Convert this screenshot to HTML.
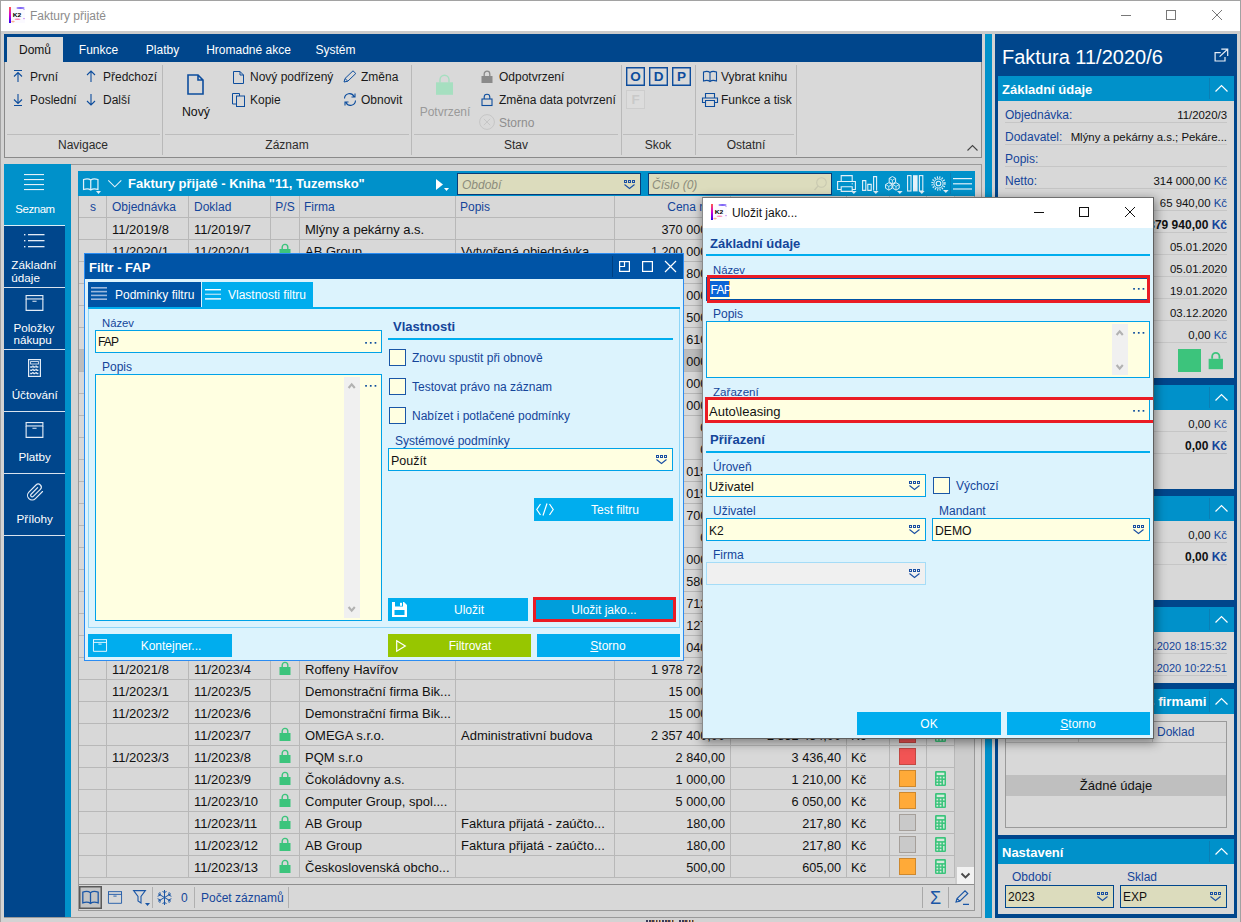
<!DOCTYPE html>
<html lang="cs"><head><meta charset="utf-8"><title>Faktury přijaté</title>
<style>

*{box-sizing:border-box;margin:0;padding:0}
html,body{width:1241px;height:922px;overflow:hidden;background:#d3d3d3}
body{font-family:"Liberation Sans",sans-serif;font-size:12px;color:#1a1a1a}
#win{position:absolute;left:0;top:0;width:1241px;height:922px;background:#d3d3d3;overflow:hidden}
.a{position:absolute}
.t{position:absolute;white-space:nowrap;line-height:1}
svg{position:absolute;overflow:visible}
.db{background:#00468c}
.lb{background:#0091ca}
.cy{background:#00adee}
.w{color:#fff}
.bl{color:#14459a}
.b{font-weight:bold}
.r{text-align:right}
.c{text-align:center}
.inp{position:absolute;background:#ffffe1;border:1px solid #00a2e8}
.gl{position:absolute;background:#b4b4b4}
</style></head><body>
<div id="win">
<div class="a" style="left:0px;top:0px;width:1241px;height:923px;background:#d3d3d3;border:1px solid #a2a2a2;"></div>
<div class="a" style="left:1px;top:1px;width:1239px;height:30px;background:#ffffff;"></div>
<div class="a" style="left:1px;top:31px;width:1239px;height:3px;background:#cccccc;"></div>
<svg style="left:9px;top:7px;" width="16" height="16" viewBox="0 0 16 16"><defs><linearGradient id="k2g1" x1="0" y1="0" x2="0" y2="1"><stop offset="0" stop-color="#ff5a4a"/><stop offset="0.5" stop-color="#d400d4"/><stop offset="1" stop-color="#2a00f0"/></linearGradient></defs><rect x="0" y="0" width="16" height="16" fill="#fbfaff"/><rect x="0" y="0" width="2" height="16" fill="url(#k2g1)"/><ellipse cx="11.5" cy="1" rx="4" ry="0.9" fill="#6748f5" opacity="0.85"/><ellipse cx="15" cy="2.6" rx="0.8" ry="0.5" fill="#9a70f0" opacity="0.7"/><ellipse cx="8.5" cy="12.2" rx="3" ry="0.7" fill="#ff5c9c" opacity="0.75"/><ellipse cx="15" cy="11.6" rx="0.9" ry="0.7" fill="#b060f0" opacity="0.75"/><ellipse cx="4" cy="14.6" rx="1.8" ry="0.8" fill="#ff9060" opacity="0.7"/><text x="3.7" y="10.1" font-family="Liberation Sans,sans-serif" font-size="6" font-weight="bold" fill="#000" textLength="8.6" lengthAdjust="spacingAndGlyphs">K2</text></svg>
<div class="t" style="top:6px;line-height:20px;font-size:12px;color:#8c8c8c;left:30px;">Faktury přijaté</div>
<svg style="left:1121px;top:15px;" width="10" height="1" viewBox="0 0 10 1"><rect width="10" height="1" fill="#787878"/></svg>
<svg style="left:1166px;top:10px;" width="10" height="10" viewBox="0 0 10 10"><rect x="0.5" y="0.5" width="9" height="9" fill="none" stroke="#787878"/></svg>
<svg style="left:1212px;top:10px;" width="10" height="10" viewBox="0 0 10 10"><path d="M0 0L10 10M10 0L0 10" stroke="#787878" stroke-width="1"/></svg>
<div class="a" style="left:4px;top:33.5px;width:978px;height:124.5px;background:#d9d9d9;border:1px solid #8a8a8a;border-top:none;"></div>
<div class="a" style="left:4px;top:33.5px;width:978px;height:28.5px;background:#00468c;"></div>
<div class="a" style="left:7px;top:37px;width:56px;height:25px;background:#d9d9d9;"></div>
<div class="t" style="top:40px;line-height:20px;font-size:12px;color:#111;left:5.0px;width:60px;text-align:center;">Domů</div>
<div class="t" style="top:40px;line-height:20px;font-size:12px;color:#fff;left:68.5px;width:60px;text-align:center;">Funkce</div>
<div class="t" style="top:40px;line-height:20px;font-size:12px;color:#fff;left:132.5px;width:60px;text-align:center;">Platby</div>
<div class="t" style="top:40px;line-height:20px;font-size:12px;color:#fff;left:198.5px;width:100px;text-align:center;">Hromadné akce</div>
<div class="t" style="top:40px;line-height:20px;font-size:12px;color:#fff;left:305.5px;width:60px;text-align:center;">Systém</div>
<div class="a" style="left:162px;top:65px;width:1px;height:90px;background:#b9b9b9;"></div>
<div class="a" style="left:411px;top:65px;width:1px;height:90px;background:#b9b9b9;"></div>
<div class="a" style="left:621px;top:65px;width:1px;height:90px;background:#b9b9b9;"></div>
<div class="a" style="left:695px;top:65px;width:1px;height:90px;background:#b9b9b9;"></div>
<div class="a" style="left:796px;top:65px;width:1px;height:90px;background:#b9b9b9;"></div>
<div class="a" style="left:7px;top:134px;width:153px;height:1px;background:#bdbdbd;"></div>
<div class="a" style="left:165px;top:134px;width:244px;height:1px;background:#bdbdbd;"></div>
<div class="a" style="left:414px;top:134px;width:204px;height:1px;background:#bdbdbd;"></div>
<div class="a" style="left:623px;top:134px;width:70px;height:1px;background:#bdbdbd;"></div>
<div class="a" style="left:698px;top:134px;width:96px;height:1px;background:#bdbdbd;"></div>
<div class="t" style="top:134.7px;line-height:20px;font-size:12px;color:#2b2b2b;left:33.0px;width:100px;text-align:center;">Navigace</div>
<div class="t" style="top:134.7px;line-height:20px;font-size:12px;color:#2b2b2b;left:237.0px;width:100px;text-align:center;">Záznam</div>
<div class="t" style="top:134.7px;line-height:20px;font-size:12px;color:#2b2b2b;left:466.0px;width:100px;text-align:center;">Stav</div>
<div class="t" style="top:134.7px;line-height:20px;font-size:12px;color:#2b2b2b;left:608.0px;width:100px;text-align:center;">Skok</div>
<div class="t" style="top:134.7px;line-height:20px;font-size:12px;color:#2b2b2b;left:696.0px;width:100px;text-align:center;">Ostatní</div>
<svg style="left:13px;top:70px;" width="10" height="12" viewBox="0 0 10 12"><path d="M1 0.5H9M5 2.5V12M1 6.5L5 2.5L9 6.5" fill="none" stroke="#0d4d9d" stroke-width="1.1"/></svg>
<svg style="left:13px;top:94px;" width="10" height="12" viewBox="0 0 10 12"><path d="M1 11.5H9M5 0V9.5M1 5.5L5 9.5L9 5.5" fill="none" stroke="#0d4d9d" stroke-width="1.1"/></svg>
<svg style="left:86px;top:70px;" width="10" height="12" viewBox="0 0 10 12"><path d="M5 1V12M1 5L5 1L9 5" fill="none" stroke="#0d4d9d" stroke-width="1.1"/></svg>
<svg style="left:86px;top:94px;" width="10" height="12" viewBox="0 0 10 12"><path d="M5 0V11M1 7L5 11L9 7" fill="none" stroke="#0d4d9d" stroke-width="1.1"/></svg>
<div class="t" style="top:67px;line-height:20px;font-size:12px;left:30px;">První</div>
<div class="t" style="top:89.6px;line-height:20px;font-size:12px;left:30px;">Poslední</div>
<div class="t" style="top:67px;line-height:20px;font-size:12px;left:103px;">Předchozí</div>
<div class="t" style="top:89.6px;line-height:20px;font-size:12px;left:103px;">Další</div>
<svg style="left:187px;top:74px;" width="17" height="21" viewBox="0 0 17 21"><path d="M1 1H11L16 6V20H1Z M11 1V6H16" fill="none" stroke="#0d4d9d" stroke-width="1.6"/></svg>
<div class="t" style="top:101.5px;line-height:20px;font-size:12.3px;color:#111;left:166.0px;width:60px;text-align:center;">Nový</div>
<svg style="left:233px;top:71px;" width="11" height="13" viewBox="0 0 11 13"><path d="M0.5 0.5H7L10.5 4V12.5H0.5Z M7 0.5V4H10.5" fill="none" stroke="#0d4d9d" stroke-width="1"/></svg>
<div class="t" style="top:67px;line-height:20px;font-size:12px;left:250px;">Nový podřízený</div>
<svg style="left:232px;top:93px;" width="13" height="14" viewBox="0 0 13 14"><path d="M4.5 11H0.5V0.5H7.5V3" fill="none" stroke="#0d4d9d" stroke-width="1"/><rect x="4.5" y="3" width="8" height="10.5" fill="none" stroke="#0d4d9d" stroke-width="1"/></svg>
<div class="t" style="top:90px;line-height:20px;font-size:12px;left:250px;">Kopie</div>
<svg style="left:343px;top:70px;" width="14" height="13" viewBox="0 0 14 13"><path d="M1 12L2 8.5L10 0.8L12.8 3.5L4.8 11.2Z M2 8.5L4.8 11.2" fill="none" stroke="#0d4d9d" stroke-width="1"/></svg>
<div class="t" style="top:67px;line-height:20px;font-size:12px;left:361px;">Změna</div>
<svg style="left:343px;top:93px;" width="14" height="13" viewBox="0 0 14 13"><path d="M1.5 5.5A5 5 0 0 1 11 3.5M12 0.5V4H8.5M12.5 7.5A5 5 0 0 1 3 9.5M2 12.5V9H5.5" fill="none" stroke="#0d4d9d" stroke-width="1.1"/></svg>
<div class="t" style="top:90px;line-height:20px;font-size:12px;left:361px;">Obnovit</div>
<svg style="left:436px;top:74px;" width="17" height="21" viewBox="0 0 17 21"><path d="M4 8.5V5.7a4.5 4.5 0 0 1 9 0V8.5" fill="none" stroke="#a6dfc0" stroke-width="1.4"/><rect x="0" y="8.3" width="17" height="12.5" fill="#a6dfc0"/></svg>
<div class="t" style="top:101.5px;line-height:20px;font-size:12px;color:#9a9a9a;left:405.0px;width:80px;text-align:center;">Potvrzení</div>
<svg style="left:481px;top:70px;" width="12" height="13" viewBox="0 0 12 13"><path d="M3.2 6V4a2.8 2.8 0 0 1 5.6 0V6" fill="none" stroke="#8a8a8a" stroke-width="1.3"/><rect x="0.5" y="6" width="11" height="7" fill="#8a8a8a"/></svg>
<div class="t" style="top:67px;line-height:20px;font-size:12px;left:499px;">Odpotvrzení</div>
<svg style="left:481px;top:93px;" width="12" height="13" viewBox="0 0 12 13"><path d="M3.2 6V4a2.8 2.8 0 0 1 5.6 0V6" fill="none" stroke="#0d4d9d" stroke-width="1.1"/><rect x="1" y="6" width="10" height="6.5" fill="none" stroke="#0d4d9d" stroke-width="1.1"/></svg>
<div class="t" style="top:90px;line-height:20px;font-size:12px;left:499px;">Změna data potvrzení</div>
<svg style="left:479px;top:114px;" width="16" height="16" viewBox="0 0 16 16"><circle cx="8" cy="8" r="7.4" fill="none" stroke="#c6c6c6" stroke-width="1"/><path d="M4.8 4.8L11.2 11.2M11.2 4.8L4.8 11.2" stroke="#c6c6c6" stroke-width="1"/></svg>
<div class="t" style="top:113px;line-height:20px;font-size:12px;color:#8e8e8e;left:499px;">Storno</div>
<div class="a" style="left:626px;top:67px;width:19px;height:19px;border:1px solid #0d4d9d;box-shadow:inset 0 0 0 0.4px #0d4d9d;"></div>
<div class="t" style="top:66.8px;line-height:20px;font-size:13.5px;color:#0d4d9d;font-weight:bold;left:625.5px;width:20px;text-align:center;">O</div>
<div class="a" style="left:649px;top:67px;width:19px;height:19px;border:1px solid #0d4d9d;box-shadow:inset 0 0 0 0.4px #0d4d9d;"></div>
<div class="t" style="top:66.8px;line-height:20px;font-size:13.5px;color:#0d4d9d;font-weight:bold;left:648.5px;width:20px;text-align:center;">D</div>
<div class="a" style="left:672px;top:67px;width:19px;height:19px;border:1px solid #0d4d9d;box-shadow:inset 0 0 0 0.4px #0d4d9d;"></div>
<div class="t" style="top:66.8px;line-height:20px;font-size:13.5px;color:#0d4d9d;font-weight:bold;left:671.5px;width:20px;text-align:center;">P</div>
<div class="a" style="left:626px;top:90px;width:19px;height:18.5px;background:#dcdcdc;border:1px solid #cdcdcd;"></div>
<div class="t" style="top:89.8px;line-height:20px;font-size:13.5px;color:#c9c9c9;font-weight:bold;left:625.5px;width:20px;text-align:center;">F</div>
<svg style="left:703px;top:71px;" width="14" height="11" viewBox="0 0 14 11"><path d="M7 1.5C5.5 0.3 2.5 0.3 0.5 1V10C2.5 9.3 5.5 9.3 7 10.5C8.5 9.3 11.5 9.3 13.5 10V1C11.5 0.3 8.5 0.3 7 1.5V10.5" fill="none" stroke="#0d4d9d" stroke-width="1.1"/></svg>
<div class="t" style="top:67px;line-height:20px;font-size:12px;left:721px;">Vybrat knihu</div>
<svg style="left:702px;top:93px;" width="16" height="14" viewBox="0 0 16 14"><path d="M3.5 5V0.5H12.5V5M3.5 9.5H0.5V5H15.5V9.5H12.5M3.5 7.5H12.5V13.5H3.5Z" fill="none" stroke="#0d4d9d" stroke-width="1.1"/></svg>
<div class="t" style="top:90px;line-height:20px;font-size:12px;left:721px;">Funkce a tisk</div>
<svg style="left:967px;top:145px;" width="11" height="6" viewBox="0 0 11 6"><path d="M0.5 5.5L5.5 0.5L10.5 5.5" fill="none" stroke="#444" stroke-width="1.1"/></svg>
<div class="a" style="left:4px;top:164px;width:978px;height:754px;background:#d4d4d4;border:1px solid #9a9a9a;"></div>
<div class="a" style="left:4px;top:164px;width:67px;height:753px;background:#0091ca;"></div>
<div class="a" style="left:4px;top:226px;width:61px;height:691px;background:#00468c;"></div>
<svg style="left:24px;top:174px;" width="20" height="17" viewBox="0 0 20 17"><rect x="0" y="0" width="20" height="1.1" fill="#e6f2f9"/><rect x="0" y="5" width="20" height="1.1" fill="#e6f2f9"/><rect x="0" y="10" width="20" height="1.1" fill="#e6f2f9"/><rect x="0" y="15" width="20" height="1.1" fill="#e6f2f9"/></svg>
<div class="t" style="top:199.2px;line-height:20px;font-size:11.4px;color:#fff;left:2.0px;width:66px;text-align:center;letter-spacing:-0.4px;">Seznam</div>
<div class="a" style="left:4px;top:287px;width:61px;height:1px;background:#ffffff;opacity:.85;"></div>
<div class="a" style="left:4px;top:349px;width:61px;height:1px;background:#ffffff;opacity:.85;"></div>
<div class="a" style="left:4px;top:411px;width:61px;height:1px;background:#ffffff;opacity:.85;"></div>
<div class="a" style="left:4px;top:473px;width:61px;height:1px;background:#ffffff;opacity:.85;"></div>
<div class="a" style="left:4px;top:535px;width:61px;height:1px;background:#ffffff;opacity:.85;"></div>
<div class="a" style="left:4px;top:225px;width:61px;height:1px;background:#ffffff;opacity:.85;"></div>
<svg style="left:24px;top:234px;" width="21" height="14" viewBox="0 0 21 14"><rect x="0" y="0" width="1.4" height="1.4" fill="#e4ecf6"/><rect x="4" y="0" width="16.5" height="1.3" fill="#e4ecf6"/><rect x="0" y="6" width="1.4" height="1.4" fill="#e4ecf6"/><rect x="4" y="6" width="16.5" height="1.3" fill="#e4ecf6"/><rect x="0" y="12" width="1.4" height="1.4" fill="#e4ecf6"/><rect x="4" y="12" width="16.5" height="1.3" fill="#e4ecf6"/></svg>
<div class="t" style="top:255.39999999999998px;line-height:20px;font-size:11.7px;color:#fff;left:11.3px;">Základní</div>
<div class="t" style="top:268px;line-height:20px;font-size:11.7px;color:#fff;left:11.3px;">údaje</div>
<svg style="left:25px;top:295.3px;" width="19" height="16" viewBox="0 0 19 17"><rect x="0.6" y="0.6" width="17.8" height="3.6" fill="none" stroke="#e4ecf6" stroke-width="1.2"/><path d="M0.6 4.2V16.4H18.4V4.2M7.3 6.6H11.7" fill="none" stroke="#e4ecf6" stroke-width="1.2"/></svg>
<div class="t" style="top:317.6px;line-height:20px;font-size:11.7px;color:#fff;left:13.4px;">Položky</div>
<div class="t" style="top:329.8px;line-height:20px;font-size:11.7px;color:#fff;left:13.4px;">nákupu</div>
<svg style="left:28px;top:359px;" width="13" height="18" viewBox="0 0 13 18"><rect x="0.6" y="0.6" width="11.8" height="16.8" fill="none" stroke="#e4ecf6" stroke-width="1.2"/><rect x="2.6" y="2.6" width="7.8" height="2.4" fill="none" stroke="#e4ecf6" stroke-width="0.9"/><path d="M2.2 8H10.8M2.2 11.2H10.8M2.2 14.4H10.8M4.9 6.6V15.6M8.1 6.6V15.6" stroke="#e4ecf6" stroke-width="1.5" stroke-dasharray="1.8 1.4"/></svg>
<div class="t" style="top:385.2px;line-height:20px;font-size:11.7px;color:#fff;left:1.7000000000000028px;width:66px;text-align:center;">Účtování</div>
<svg style="left:25px;top:422px;" width="19" height="16" viewBox="0 0 19 17"><rect x="0.6" y="0.6" width="17.8" height="3.6" fill="none" stroke="#e4ecf6" stroke-width="1.2"/><path d="M0.6 4.2V16.4H18.4V4.2M7.3 6.6H11.7" fill="none" stroke="#e4ecf6" stroke-width="1.2"/></svg>
<div class="t" style="top:447px;line-height:20px;font-size:11.7px;color:#fff;left:1.7000000000000028px;width:66px;text-align:center;">Platby</div>
<svg style="left:26px;top:483px;" width="18.5" height="18.5" viewBox="0 0 24 24"><path d="M21.44 11.05l-9.19 9.19a6 6 0 0 1-8.49-8.49l9.19-9.19a4 4 0 0 1 5.66 5.66l-9.2 9.19a2 2 0 0 1-2.83-2.83l8.49-8.48" fill="none" stroke="#e4ecf6" stroke-width="1.5" stroke-linecap="round"/></svg>
<div class="t" style="top:509px;line-height:20px;font-size:11.7px;color:#fff;left:1.7000000000000028px;width:66px;text-align:center;">Přílohy</div>
<div class="a" style="left:78px;top:171px;width:897px;height:740px;background:#d8d8d8;border:1px solid #9a9a9a;border-top:none;"></div>
<div class="a" style="left:78px;top:171px;width:897px;height:25px;background:#0091ca;"></div>
<svg style="left:83px;top:177.5px;" width="15.5" height="13" viewBox="0 0 14 11"><path d="M7 1.5C5.5 0.3 2.5 0.3 0.5 1V10C2.5 9.3 5.5 9.3 7 10.5C8.5 9.3 11.5 9.3 13.5 10V1C11.5 0.3 8.5 0.3 7 1.5V10.5" fill="none" stroke="#e2f1f9" stroke-width="1.1"/></svg>
<svg style="left:95.5px;top:190.5px;" width="5" height="3" viewBox="0 0 5 3"><path d="M0 0H5L2.5 3Z" fill="#e2f1f9"/></svg>
<svg style="left:108px;top:180px;" width="14" height="8" viewBox="0 0 14 8"><path d="M0.3 0.3L6.8 6.8L13.3 0.3" fill="none" stroke="#e2f1f9" stroke-width="1.1"/></svg>
<div class="t" style="top:174.4px;line-height:20px;font-size:13px;color:#fff;font-weight:bold;left:128px;">Faktury přijaté - Kniha "11, Tuzemsko"</div>
<svg style="left:436px;top:179px;" width="7" height="11" viewBox="0 0 7 11"><path d="M0 0L7 5.5L0 11Z" fill="#fff"/></svg>
<svg style="left:444px;top:188px;" width="5" height="3" viewBox="0 0 5 3"><path d="M0 0H5L2.5 3Z" fill="#fff"/></svg>
<div class="a" style="left:457px;top:172.5px;width:183.5px;height:22px;background:#dcdcbd;border:1px solid #0a3c78;"></div>
<div class="t" style="top:174.6px;line-height:20px;font-size:12px;color:#8c8c7c;left:462px;font-style:italic;">Období</div>
<svg style="left:624px;top:180px;" width="11" height="9" viewBox="0 0 11 9"><rect x="0.5" y="0.5" width="2" height="2" fill="none" stroke="#1a4fa3" stroke-width="1"/><rect x="4.5" y="0.5" width="2" height="2" fill="none" stroke="#1a4fa3" stroke-width="1"/><rect x="8.5" y="0.5" width="2" height="2" fill="none" stroke="#1a4fa3" stroke-width="1"/><path d="M0.5 4.5L5.5 8.5L10.5 4.5" fill="none" stroke="#1a4fa3" stroke-width="1.1"/></svg>
<div class="a" style="left:648px;top:172.5px;width:184px;height:22px;background:#dcdcbd;border:1px solid #0a3c78;"></div>
<div class="t" style="top:174.6px;line-height:20px;font-size:12px;color:#8c8c7c;left:652px;font-style:italic;">Číslo (0)</div>
<svg style="left:814px;top:177px;" width="13" height="14" viewBox="0 0 13 14"><circle cx="7.5" cy="5.5" r="4.8" fill="none" stroke="#c9c9b0" stroke-width="1.1"/><path d="M4 9L0.5 13" stroke="#c9c9b0" stroke-width="1.2"/></svg>
<svg style="left:837px;top:175px;" width="19" height="17" viewBox="0 0 19 17"><path d="M4.2 6.5V0.6H15.2V6.5M4.2 14.5H0.6V6.5H18.4V14.5H15.2M4.2 11.8H15.2V16.4H4.2Z" fill="none" stroke="#e2f1f9" stroke-width="1.1"/><rect x="14.6" y="8.4" width="1.4" height="0.9" fill="#e2f1f9"/></svg>
<svg style="left:851.4px;top:191px;" width="5.6" height="3" viewBox="0 0 5.6 3"><path d="M0 0H5.6L2.8 3Z" fill="#e2f1f9"/></svg>
<svg style="left:862px;top:176px;" width="15" height="15" viewBox="0 0 15 15"><path d="M0.6 14.4V4.6H3.8V14.4ZM5.8 14.4V8.4H9.2V14.4ZM11.6 14.4V0.6H14.6V14.4" fill="none" stroke="#e2f1f9" stroke-width="1.1"/></svg>
<svg style="left:873.3px;top:190.6px;" width="5.6" height="3" viewBox="0 0 5.6 3"><path d="M0 0H5.6L2.8 3Z" fill="#e2f1f9"/></svg>
<svg style="left:885px;top:176px;" width="16" height="16" viewBox="0 0 16 16"><path d="M7.4 0.5L10.60 2.35V6.050000000000001L7.4 7.9L4.20 6.050000000000001V2.35Z" fill="none" stroke="#e2f1f9" stroke-width="1"/><path d="M7.4 7.9V4.2L10.60 2.35M7.4 4.2L4.20 2.35" fill="none" stroke="#e2f1f9" stroke-width="0.8"/><path d="M3.8 6.7L7.00 8.55V12.25L3.8 14.100000000000001L0.60 12.25V8.55Z" fill="none" stroke="#e2f1f9" stroke-width="1"/><path d="M3.8 14.100000000000001V10.4L7.00 8.55M3.8 10.4L0.60 8.55" fill="none" stroke="#e2f1f9" stroke-width="0.8"/><path d="M11 6.7L14.20 8.55V12.25L11 14.100000000000001L7.80 12.25V8.55Z" fill="none" stroke="#e2f1f9" stroke-width="1"/><path d="M11 14.100000000000001V10.4L14.20 8.55M11 10.4L7.80 8.55" fill="none" stroke="#e2f1f9" stroke-width="0.8"/></svg>
<svg style="left:896.5px;top:190.6px;" width="5.6" height="3" viewBox="0 0 5.6 3"><path d="M0 0H5.6L2.8 3Z" fill="#e2f1f9"/></svg>
<svg style="left:907px;top:175px;" width="17" height="17" viewBox="0 0 17 17"><rect x="0.6" y="0.6" width="3.4" height="15.4" fill="none" stroke="#e2f1f9" stroke-width="1.1"/><rect x="6" y="0.2" width="4.6" height="16.2" fill="#e2f1f9"/><rect x="12.4" y="0.6" width="3.4" height="15.4" fill="none" stroke="#e2f1f9" stroke-width="1.1"/></svg>
<svg style="left:918.8px;top:191px;" width="5.6" height="3" viewBox="0 0 5.6 3"><path d="M0 0H5.6L2.8 3Z" fill="#e2f1f9"/></svg>
<svg style="left:931px;top:176px;" width="15" height="15" viewBox="0 0 15 15"><circle cx="7.5" cy="7.5" r="2.3" fill="none" stroke="#e2f1f9" stroke-width="1.1"/><circle cx="7.5" cy="7.5" r="4.6" fill="none" stroke="#e2f1f9" stroke-width="1"/><circle cx="7.5" cy="7.5" r="6.2" fill="none" stroke="#e2f1f9" stroke-width="2" stroke-dasharray="1.1 1.34"/></svg>
<svg style="left:943.4px;top:190.2px;" width="5.6" height="3" viewBox="0 0 5.6 3"><path d="M0 0H5.6L2.8 3Z" fill="#e2f1f9"/></svg>
<div class="a" style="left:950px;top:173px;width:1px;height:21px;background:#0a7fb5;"></div>
<svg style="left:953px;top:178px;" width="19" height="12" viewBox="0 0 19 12"><rect x="0" y="0.0" width="19" height="1.2" fill="#e2f1f9"/><rect x="0" y="5.2" width="19" height="1.2" fill="#e2f1f9"/><rect x="0" y="10.4" width="19" height="1.2" fill="#e2f1f9"/></svg>
<div class="a" style="left:79px;top:196px;width:875px;height:22px;background:#d8d8d8;"></div>
<div class="t" style="top:197px;line-height:20px;font-size:12px;color:#14459a;left:79.0px;width:28px;text-align:center;">s</div>
<div class="t" style="top:197px;line-height:20px;font-size:12px;color:#14459a;left:112px;">Objednávka</div>
<div class="t" style="top:197px;line-height:20px;font-size:12px;color:#14459a;left:194px;">Doklad</div>
<div class="t" style="top:197px;line-height:20px;font-size:12px;color:#14459a;left:271.0px;width:28px;text-align:center;">P/S</div>
<div class="t" style="top:197px;line-height:20px;font-size:12px;color:#14459a;left:304px;">Firma</div>
<div class="t" style="top:197px;line-height:20px;font-size:12px;color:#14459a;left:460px;">Popis</div>
<div class="t" style="top:197px;line-height:20px;font-size:12px;color:#14459a;left:426px;width:300px;text-align:right;">Cena netto</div>
<div class="t" style="top:197px;line-height:20px;font-size:12px;color:#14459a;left:542px;width:300px;text-align:right;">Cena brutto</div>
<div class="t" style="top:197px;line-height:20px;font-size:12px;color:#14459a;left:851px;">Měna</div>
<div class="t" style="top:197px;line-height:20px;font-size:12px;color:#14459a;left:895px;"></div>
<div class="t" style="top:197px;line-height:20px;font-size:12px;color:#14459a;left:932px;"></div>
<div class="t" style="top:219.5px;line-height:20px;font-size:13px;color:#111;left:112px;">11/2019/8</div>
<div class="t" style="top:219.5px;line-height:20px;font-size:13px;color:#111;left:194px;">11/2019/7</div>
<div class="t" style="top:219.5px;line-height:20px;font-size:13px;color:#111;left:305px;">Mlýny a pekárny a.s.</div>
<div class="t" style="top:219.5px;line-height:20px;font-size:12.7px;color:#111;left:425px;width:300px;text-align:right;">370 000,00</div>
<div class="t" style="top:219.5px;line-height:20px;font-size:12.7px;color:#111;left:541px;width:300px;text-align:right;">447 700,00</div>
<div class="t" style="top:219.5px;line-height:20px;font-size:13px;color:#111;left:851px;">Kč</div>
<div class="a" style="left:899px;top:220.4px;width:17px;height:16.5px;background:#ffaa38;border:1px solid rgba(60,40,20,.26);"></div>
<svg style="left:935px;top:220.9px;" width="11" height="15" viewBox="0 0 11 15"><rect x="0" y="0" width="11" height="15" rx="1.2" fill="#3cc47c"/><rect x="1.7" y="1.7" width="7.6" height="2.4" fill="#d6eadd"/><rect x="1.5" y="5.7" width="1.7" height="1.7" fill="#d6eadd"/><rect x="4.7" y="5.7" width="1.7" height="1.7" fill="#d6eadd"/><rect x="7.9" y="5.7" width="1.7" height="1.7" fill="#d6eadd"/><rect x="1.5" y="8.8" width="1.7" height="1.7" fill="#d6eadd"/><rect x="4.7" y="8.8" width="1.7" height="1.7" fill="#d6eadd"/><rect x="1.5" y="11.9" width="1.7" height="1.7" fill="#d6eadd"/><rect x="4.7" y="11.9" width="1.7" height="1.7" fill="#d6eadd"/><rect x="8.1" y="9" width="1.4" height="4.5" fill="#d6eadd"/></svg>
<div class="t" style="top:241.5px;line-height:20px;font-size:13px;color:#111;left:112px;">11/2020/1</div>
<div class="t" style="top:241.5px;line-height:20px;font-size:13px;color:#111;left:194px;">11/2020/1</div>
<svg style="left:278.6px;top:243.4px;" width="12.0" height="14.0" viewBox="0 0 12 14"><path d="M3.2 6V4.2a2.8 2.8 0 0 1 5.6 0V6" fill="none" stroke="#3cc47c" stroke-width="1.4"/><rect x="0.5" y="6" width="11" height="8" fill="#3cc47c"/></svg>
<div class="t" style="top:241.5px;line-height:20px;font-size:13px;color:#111;left:305px;">AB Group</div>
<div class="t" style="top:241.5px;line-height:20px;font-size:13px;color:#111;left:461px;">Vytvořená objednávka</div>
<div class="t" style="top:241.5px;line-height:20px;font-size:12.7px;color:#111;left:425px;width:300px;text-align:right;">1 200 000,00</div>
<div class="t" style="top:241.5px;line-height:20px;font-size:12.7px;color:#111;left:541px;width:300px;text-align:right;">1 452 000,00</div>
<div class="t" style="top:241.5px;line-height:20px;font-size:13px;color:#111;left:851px;">Kč</div>
<div class="a" style="left:899px;top:242.4px;width:17px;height:16.5px;background:#ffaa38;border:1px solid rgba(60,40,20,.26);"></div>
<svg style="left:935px;top:242.9px;" width="11" height="15" viewBox="0 0 11 15"><rect x="0" y="0" width="11" height="15" rx="1.2" fill="#3cc47c"/><rect x="1.7" y="1.7" width="7.6" height="2.4" fill="#d6eadd"/><rect x="1.5" y="5.7" width="1.7" height="1.7" fill="#d6eadd"/><rect x="4.7" y="5.7" width="1.7" height="1.7" fill="#d6eadd"/><rect x="7.9" y="5.7" width="1.7" height="1.7" fill="#d6eadd"/><rect x="1.5" y="8.8" width="1.7" height="1.7" fill="#d6eadd"/><rect x="4.7" y="8.8" width="1.7" height="1.7" fill="#d6eadd"/><rect x="1.5" y="11.9" width="1.7" height="1.7" fill="#d6eadd"/><rect x="4.7" y="11.9" width="1.7" height="1.7" fill="#d6eadd"/><rect x="8.1" y="9" width="1.4" height="4.5" fill="#d6eadd"/></svg>
<div class="t" style="top:263.5px;line-height:20px;font-size:13px;color:#111;left:112px;">11/2020/2</div>
<div class="t" style="top:263.5px;line-height:20px;font-size:13px;color:#111;left:194px;">11/2020/2</div>
<svg style="left:278.6px;top:265.4px;" width="12.0" height="14.0" viewBox="0 0 12 14"><path d="M3.2 6V4.2a2.8 2.8 0 0 1 5.6 0V6" fill="none" stroke="#3cc47c" stroke-width="1.4"/><rect x="0.5" y="6" width="11" height="8" fill="#3cc47c"/></svg>
<div class="t" style="top:263.5px;line-height:20px;font-size:13px;color:#111;left:305px;">AB Group</div>
<div class="t" style="top:263.5px;line-height:20px;font-size:12.7px;color:#111;left:425px;width:300px;text-align:right;">800,00</div>
<div class="t" style="top:263.5px;line-height:20px;font-size:12.7px;color:#111;left:541px;width:300px;text-align:right;">968,00</div>
<div class="t" style="top:263.5px;line-height:20px;font-size:13px;color:#111;left:851px;">Kč</div>
<div class="a" style="left:899px;top:264.4px;width:17px;height:16.5px;background:#ffaa38;border:1px solid rgba(60,40,20,.26);"></div>
<svg style="left:935px;top:264.9px;" width="11" height="15" viewBox="0 0 11 15"><rect x="0" y="0" width="11" height="15" rx="1.2" fill="#3cc47c"/><rect x="1.7" y="1.7" width="7.6" height="2.4" fill="#d6eadd"/><rect x="1.5" y="5.7" width="1.7" height="1.7" fill="#d6eadd"/><rect x="4.7" y="5.7" width="1.7" height="1.7" fill="#d6eadd"/><rect x="7.9" y="5.7" width="1.7" height="1.7" fill="#d6eadd"/><rect x="1.5" y="8.8" width="1.7" height="1.7" fill="#d6eadd"/><rect x="4.7" y="8.8" width="1.7" height="1.7" fill="#d6eadd"/><rect x="1.5" y="11.9" width="1.7" height="1.7" fill="#d6eadd"/><rect x="4.7" y="11.9" width="1.7" height="1.7" fill="#d6eadd"/><rect x="8.1" y="9" width="1.4" height="4.5" fill="#d6eadd"/></svg>
<div class="t" style="top:285.5px;line-height:20px;font-size:13px;color:#111;left:194px;">11/2020/3</div>
<svg style="left:278.6px;top:287.4px;" width="12.0" height="14.0" viewBox="0 0 12 14"><path d="M3.2 6V4.2a2.8 2.8 0 0 1 5.6 0V6" fill="none" stroke="#3cc47c" stroke-width="1.4"/><rect x="0.5" y="6" width="11" height="8" fill="#3cc47c"/></svg>
<div class="t" style="top:285.5px;line-height:20px;font-size:13px;color:#111;left:305px;">AB Group</div>
<div class="t" style="top:285.5px;line-height:20px;font-size:12.7px;color:#111;left:425px;width:300px;text-align:right;">1 000,00</div>
<div class="t" style="top:285.5px;line-height:20px;font-size:12.7px;color:#111;left:541px;width:300px;text-align:right;">1 210,00</div>
<div class="t" style="top:285.5px;line-height:20px;font-size:13px;color:#111;left:851px;">Kč</div>
<div class="a" style="left:899px;top:286.4px;width:17px;height:16.5px;background:#ffaa38;border:1px solid rgba(60,40,20,.26);"></div>
<svg style="left:935px;top:286.9px;" width="11" height="15" viewBox="0 0 11 15"><rect x="0" y="0" width="11" height="15" rx="1.2" fill="#3cc47c"/><rect x="1.7" y="1.7" width="7.6" height="2.4" fill="#d6eadd"/><rect x="1.5" y="5.7" width="1.7" height="1.7" fill="#d6eadd"/><rect x="4.7" y="5.7" width="1.7" height="1.7" fill="#d6eadd"/><rect x="7.9" y="5.7" width="1.7" height="1.7" fill="#d6eadd"/><rect x="1.5" y="8.8" width="1.7" height="1.7" fill="#d6eadd"/><rect x="4.7" y="8.8" width="1.7" height="1.7" fill="#d6eadd"/><rect x="1.5" y="11.9" width="1.7" height="1.7" fill="#d6eadd"/><rect x="4.7" y="11.9" width="1.7" height="1.7" fill="#d6eadd"/><rect x="8.1" y="9" width="1.4" height="4.5" fill="#d6eadd"/></svg>
<div class="t" style="top:307.5px;line-height:20px;font-size:13px;color:#111;left:194px;">11/2020/4</div>
<svg style="left:278.6px;top:309.4px;" width="12.0" height="14.0" viewBox="0 0 12 14"><path d="M3.2 6V4.2a2.8 2.8 0 0 1 5.6 0V6" fill="none" stroke="#3cc47c" stroke-width="1.4"/><rect x="0.5" y="6" width="11" height="8" fill="#3cc47c"/></svg>
<div class="t" style="top:307.5px;line-height:20px;font-size:13px;color:#111;left:305px;">AB Group</div>
<div class="t" style="top:307.5px;line-height:20px;font-size:12.7px;color:#111;left:425px;width:300px;text-align:right;">500,00</div>
<div class="t" style="top:307.5px;line-height:20px;font-size:12.7px;color:#111;left:541px;width:300px;text-align:right;">605,00</div>
<div class="t" style="top:307.5px;line-height:20px;font-size:13px;color:#111;left:851px;">Kč</div>
<div class="a" style="left:899px;top:308.4px;width:17px;height:16.5px;background:#ffaa38;border:1px solid rgba(60,40,20,.26);"></div>
<svg style="left:935px;top:308.9px;" width="11" height="15" viewBox="0 0 11 15"><rect x="0" y="0" width="11" height="15" rx="1.2" fill="#3cc47c"/><rect x="1.7" y="1.7" width="7.6" height="2.4" fill="#d6eadd"/><rect x="1.5" y="5.7" width="1.7" height="1.7" fill="#d6eadd"/><rect x="4.7" y="5.7" width="1.7" height="1.7" fill="#d6eadd"/><rect x="7.9" y="5.7" width="1.7" height="1.7" fill="#d6eadd"/><rect x="1.5" y="8.8" width="1.7" height="1.7" fill="#d6eadd"/><rect x="4.7" y="8.8" width="1.7" height="1.7" fill="#d6eadd"/><rect x="1.5" y="11.9" width="1.7" height="1.7" fill="#d6eadd"/><rect x="4.7" y="11.9" width="1.7" height="1.7" fill="#d6eadd"/><rect x="8.1" y="9" width="1.4" height="4.5" fill="#d6eadd"/></svg>
<div class="t" style="top:329.5px;line-height:20px;font-size:13px;color:#111;left:194px;">11/2020/5</div>
<svg style="left:278.6px;top:331.4px;" width="12.0" height="14.0" viewBox="0 0 12 14"><path d="M3.2 6V4.2a2.8 2.8 0 0 1 5.6 0V6" fill="none" stroke="#3cc47c" stroke-width="1.4"/><rect x="0.5" y="6" width="11" height="8" fill="#3cc47c"/></svg>
<div class="t" style="top:329.5px;line-height:20px;font-size:13px;color:#111;left:305px;">AB Group</div>
<div class="t" style="top:329.5px;line-height:20px;font-size:12.7px;color:#111;left:425px;width:300px;text-align:right;">610,00</div>
<div class="t" style="top:329.5px;line-height:20px;font-size:12.7px;color:#111;left:541px;width:300px;text-align:right;">738,10</div>
<div class="t" style="top:329.5px;line-height:20px;font-size:13px;color:#111;left:851px;">Kč</div>
<div class="a" style="left:899px;top:330.4px;width:17px;height:16.5px;background:#ffaa38;border:1px solid rgba(60,40,20,.26);"></div>
<svg style="left:935px;top:330.9px;" width="11" height="15" viewBox="0 0 11 15"><rect x="0" y="0" width="11" height="15" rx="1.2" fill="#3cc47c"/><rect x="1.7" y="1.7" width="7.6" height="2.4" fill="#d6eadd"/><rect x="1.5" y="5.7" width="1.7" height="1.7" fill="#d6eadd"/><rect x="4.7" y="5.7" width="1.7" height="1.7" fill="#d6eadd"/><rect x="7.9" y="5.7" width="1.7" height="1.7" fill="#d6eadd"/><rect x="1.5" y="8.8" width="1.7" height="1.7" fill="#d6eadd"/><rect x="4.7" y="8.8" width="1.7" height="1.7" fill="#d6eadd"/><rect x="1.5" y="11.9" width="1.7" height="1.7" fill="#d6eadd"/><rect x="4.7" y="11.9" width="1.7" height="1.7" fill="#d6eadd"/><rect x="8.1" y="9" width="1.4" height="4.5" fill="#d6eadd"/></svg>
<div class="a" style="left:79px;top:350px;width:875px;height:22px;background:#bdbdbd;"></div>
<div class="t" style="top:351.5px;line-height:20px;font-size:13px;color:#111;left:112px;">11/2020/3</div>
<div class="t" style="top:351.5px;line-height:20px;font-size:13px;color:#111;left:194px;">11/2020/6</div>
<svg style="left:278.6px;top:353.4px;" width="12.0" height="14.0" viewBox="0 0 12 14"><path d="M3.2 6V4.2a2.8 2.8 0 0 1 5.6 0V6" fill="none" stroke="#3cc47c" stroke-width="1.4"/><rect x="0.5" y="6" width="11" height="8" fill="#3cc47c"/></svg>
<div class="t" style="top:351.5px;line-height:20px;font-size:13px;color:#111;left:305px;">Mlýny a pekárny a.s.</div>
<div class="t" style="top:351.5px;line-height:20px;font-size:12.7px;color:#111;left:425px;width:300px;text-align:right;">314 000,00</div>
<div class="t" style="top:351.5px;line-height:20px;font-size:12.7px;color:#111;left:541px;width:300px;text-align:right;">379 940,00</div>
<div class="t" style="top:351.5px;line-height:20px;font-size:13px;color:#111;left:851px;">Kč</div>
<div class="a" style="left:899px;top:352.4px;width:17px;height:16.5px;background:#3cc47c;border:1px solid rgba(60,40,20,.26);"></div>
<div class="t" style="top:373.5px;line-height:20px;font-size:13px;color:#111;left:194px;">11/2020/7</div>
<svg style="left:278.6px;top:375.4px;" width="12.0" height="14.0" viewBox="0 0 12 14"><path d="M3.2 6V4.2a2.8 2.8 0 0 1 5.6 0V6" fill="none" stroke="#3cc47c" stroke-width="1.4"/><rect x="0.5" y="6" width="11" height="8" fill="#3cc47c"/></svg>
<div class="t" style="top:373.5px;line-height:20px;font-size:13px;color:#111;left:305px;">AB Group</div>
<div class="t" style="top:373.5px;line-height:20px;font-size:12.7px;color:#111;left:425px;width:300px;text-align:right;">1 000,00</div>
<div class="t" style="top:373.5px;line-height:20px;font-size:12.7px;color:#111;left:541px;width:300px;text-align:right;">1 210,00</div>
<div class="t" style="top:373.5px;line-height:20px;font-size:13px;color:#111;left:851px;">Kč</div>
<div class="a" style="left:899px;top:374.4px;width:17px;height:16.5px;background:#ffaa38;border:1px solid rgba(60,40,20,.26);"></div>
<svg style="left:935px;top:374.9px;" width="11" height="15" viewBox="0 0 11 15"><rect x="0" y="0" width="11" height="15" rx="1.2" fill="#3cc47c"/><rect x="1.7" y="1.7" width="7.6" height="2.4" fill="#d6eadd"/><rect x="1.5" y="5.7" width="1.7" height="1.7" fill="#d6eadd"/><rect x="4.7" y="5.7" width="1.7" height="1.7" fill="#d6eadd"/><rect x="7.9" y="5.7" width="1.7" height="1.7" fill="#d6eadd"/><rect x="1.5" y="8.8" width="1.7" height="1.7" fill="#d6eadd"/><rect x="4.7" y="8.8" width="1.7" height="1.7" fill="#d6eadd"/><rect x="1.5" y="11.9" width="1.7" height="1.7" fill="#d6eadd"/><rect x="4.7" y="11.9" width="1.7" height="1.7" fill="#d6eadd"/><rect x="8.1" y="9" width="1.4" height="4.5" fill="#d6eadd"/></svg>
<div class="t" style="top:395.5px;line-height:20px;font-size:13px;color:#111;left:194px;">11/2020/8</div>
<svg style="left:278.6px;top:397.4px;" width="12.0" height="14.0" viewBox="0 0 12 14"><path d="M3.2 6V4.2a2.8 2.8 0 0 1 5.6 0V6" fill="none" stroke="#3cc47c" stroke-width="1.4"/><rect x="0.5" y="6" width="11" height="8" fill="#3cc47c"/></svg>
<div class="t" style="top:395.5px;line-height:20px;font-size:13px;color:#111;left:305px;">AB Group</div>
<div class="t" style="top:395.5px;line-height:20px;font-size:12.7px;color:#111;left:425px;width:300px;text-align:right;">2 000,00</div>
<div class="t" style="top:395.5px;line-height:20px;font-size:12.7px;color:#111;left:541px;width:300px;text-align:right;">2 420,00</div>
<div class="t" style="top:395.5px;line-height:20px;font-size:13px;color:#111;left:851px;">Kč</div>
<div class="a" style="left:899px;top:396.4px;width:17px;height:16.5px;background:#ffaa38;border:1px solid rgba(60,40,20,.26);"></div>
<svg style="left:935px;top:396.9px;" width="11" height="15" viewBox="0 0 11 15"><rect x="0" y="0" width="11" height="15" rx="1.2" fill="#3cc47c"/><rect x="1.7" y="1.7" width="7.6" height="2.4" fill="#d6eadd"/><rect x="1.5" y="5.7" width="1.7" height="1.7" fill="#d6eadd"/><rect x="4.7" y="5.7" width="1.7" height="1.7" fill="#d6eadd"/><rect x="7.9" y="5.7" width="1.7" height="1.7" fill="#d6eadd"/><rect x="1.5" y="8.8" width="1.7" height="1.7" fill="#d6eadd"/><rect x="4.7" y="8.8" width="1.7" height="1.7" fill="#d6eadd"/><rect x="1.5" y="11.9" width="1.7" height="1.7" fill="#d6eadd"/><rect x="4.7" y="11.9" width="1.7" height="1.7" fill="#d6eadd"/><rect x="8.1" y="9" width="1.4" height="4.5" fill="#d6eadd"/></svg>
<div class="t" style="top:417.5px;line-height:20px;font-size:13px;color:#111;left:194px;">11/2020/9</div>
<svg style="left:278.6px;top:419.4px;" width="12.0" height="14.0" viewBox="0 0 12 14"><path d="M3.2 6V4.2a2.8 2.8 0 0 1 5.6 0V6" fill="none" stroke="#3cc47c" stroke-width="1.4"/><rect x="0.5" y="6" width="11" height="8" fill="#3cc47c"/></svg>
<div class="t" style="top:417.5px;line-height:20px;font-size:13px;color:#111;left:305px;">AB Group</div>
<div class="t" style="top:417.5px;line-height:20px;font-size:12.7px;color:#111;left:425px;width:300px;text-align:right;">0,00</div>
<div class="t" style="top:417.5px;line-height:20px;font-size:12.7px;color:#111;left:541px;width:300px;text-align:right;">0,00</div>
<div class="t" style="top:417.5px;line-height:20px;font-size:13px;color:#111;left:851px;">Kč</div>
<div class="a" style="left:899px;top:418.4px;width:17px;height:16.5px;background:#ffaa38;border:1px solid rgba(60,40,20,.26);"></div>
<svg style="left:935px;top:418.9px;" width="11" height="15" viewBox="0 0 11 15"><rect x="0" y="0" width="11" height="15" rx="1.2" fill="#3cc47c"/><rect x="1.7" y="1.7" width="7.6" height="2.4" fill="#d6eadd"/><rect x="1.5" y="5.7" width="1.7" height="1.7" fill="#d6eadd"/><rect x="4.7" y="5.7" width="1.7" height="1.7" fill="#d6eadd"/><rect x="7.9" y="5.7" width="1.7" height="1.7" fill="#d6eadd"/><rect x="1.5" y="8.8" width="1.7" height="1.7" fill="#d6eadd"/><rect x="4.7" y="8.8" width="1.7" height="1.7" fill="#d6eadd"/><rect x="1.5" y="11.9" width="1.7" height="1.7" fill="#d6eadd"/><rect x="4.7" y="11.9" width="1.7" height="1.7" fill="#d6eadd"/><rect x="8.1" y="9" width="1.4" height="4.5" fill="#d6eadd"/></svg>
<div class="t" style="top:439.5px;line-height:20px;font-size:13px;color:#111;left:194px;">11/2020/10</div>
<svg style="left:278.6px;top:441.4px;" width="12.0" height="14.0" viewBox="0 0 12 14"><path d="M3.2 6V4.2a2.8 2.8 0 0 1 5.6 0V6" fill="none" stroke="#3cc47c" stroke-width="1.4"/><rect x="0.5" y="6" width="11" height="8" fill="#3cc47c"/></svg>
<div class="t" style="top:439.5px;line-height:20px;font-size:13px;color:#111;left:305px;">AB Group</div>
<div class="t" style="top:439.5px;line-height:20px;font-size:12.7px;color:#111;left:425px;width:300px;text-align:right;">0,00</div>
<div class="t" style="top:439.5px;line-height:20px;font-size:12.7px;color:#111;left:541px;width:300px;text-align:right;">0,00</div>
<div class="t" style="top:439.5px;line-height:20px;font-size:13px;color:#111;left:851px;">Kč</div>
<div class="a" style="left:899px;top:440.4px;width:17px;height:16.5px;background:#ffaa38;border:1px solid rgba(60,40,20,.26);"></div>
<svg style="left:935px;top:440.9px;" width="11" height="15" viewBox="0 0 11 15"><rect x="0" y="0" width="11" height="15" rx="1.2" fill="#3cc47c"/><rect x="1.7" y="1.7" width="7.6" height="2.4" fill="#d6eadd"/><rect x="1.5" y="5.7" width="1.7" height="1.7" fill="#d6eadd"/><rect x="4.7" y="5.7" width="1.7" height="1.7" fill="#d6eadd"/><rect x="7.9" y="5.7" width="1.7" height="1.7" fill="#d6eadd"/><rect x="1.5" y="8.8" width="1.7" height="1.7" fill="#d6eadd"/><rect x="4.7" y="8.8" width="1.7" height="1.7" fill="#d6eadd"/><rect x="1.5" y="11.9" width="1.7" height="1.7" fill="#d6eadd"/><rect x="4.7" y="11.9" width="1.7" height="1.7" fill="#d6eadd"/><rect x="8.1" y="9" width="1.4" height="4.5" fill="#d6eadd"/></svg>
<div class="t" style="top:461.5px;line-height:20px;font-size:13px;color:#111;left:194px;">11/2021/1</div>
<svg style="left:278.6px;top:463.4px;" width="12.0" height="14.0" viewBox="0 0 12 14"><path d="M3.2 6V4.2a2.8 2.8 0 0 1 5.6 0V6" fill="none" stroke="#3cc47c" stroke-width="1.4"/><rect x="0.5" y="6" width="11" height="8" fill="#3cc47c"/></svg>
<div class="t" style="top:461.5px;line-height:20px;font-size:13px;color:#111;left:305px;">AB Group</div>
<div class="t" style="top:461.5px;line-height:20px;font-size:12.7px;color:#111;left:425px;width:300px;text-align:right;">1 015,00</div>
<div class="t" style="top:461.5px;line-height:20px;font-size:12.7px;color:#111;left:541px;width:300px;text-align:right;">1 228,15</div>
<div class="t" style="top:461.5px;line-height:20px;font-size:13px;color:#111;left:851px;">Kč</div>
<div class="a" style="left:899px;top:462.4px;width:17px;height:16.5px;background:#ffaa38;border:1px solid rgba(60,40,20,.26);"></div>
<svg style="left:935px;top:462.9px;" width="11" height="15" viewBox="0 0 11 15"><rect x="0" y="0" width="11" height="15" rx="1.2" fill="#3cc47c"/><rect x="1.7" y="1.7" width="7.6" height="2.4" fill="#d6eadd"/><rect x="1.5" y="5.7" width="1.7" height="1.7" fill="#d6eadd"/><rect x="4.7" y="5.7" width="1.7" height="1.7" fill="#d6eadd"/><rect x="7.9" y="5.7" width="1.7" height="1.7" fill="#d6eadd"/><rect x="1.5" y="8.8" width="1.7" height="1.7" fill="#d6eadd"/><rect x="4.7" y="8.8" width="1.7" height="1.7" fill="#d6eadd"/><rect x="1.5" y="11.9" width="1.7" height="1.7" fill="#d6eadd"/><rect x="4.7" y="11.9" width="1.7" height="1.7" fill="#d6eadd"/><rect x="8.1" y="9" width="1.4" height="4.5" fill="#d6eadd"/></svg>
<div class="t" style="top:483.5px;line-height:20px;font-size:13px;color:#111;left:194px;">11/2021/2</div>
<svg style="left:278.6px;top:485.4px;" width="12.0" height="14.0" viewBox="0 0 12 14"><path d="M3.2 6V4.2a2.8 2.8 0 0 1 5.6 0V6" fill="none" stroke="#3cc47c" stroke-width="1.4"/><rect x="0.5" y="6" width="11" height="8" fill="#3cc47c"/></svg>
<div class="t" style="top:483.5px;line-height:20px;font-size:13px;color:#111;left:305px;">AB Group</div>
<div class="t" style="top:483.5px;line-height:20px;font-size:12.7px;color:#111;left:425px;width:300px;text-align:right;">1 015,00</div>
<div class="t" style="top:483.5px;line-height:20px;font-size:12.7px;color:#111;left:541px;width:300px;text-align:right;">1 228,15</div>
<div class="t" style="top:483.5px;line-height:20px;font-size:13px;color:#111;left:851px;">Kč</div>
<div class="a" style="left:899px;top:484.4px;width:17px;height:16.5px;background:#ffaa38;border:1px solid rgba(60,40,20,.26);"></div>
<svg style="left:935px;top:484.9px;" width="11" height="15" viewBox="0 0 11 15"><rect x="0" y="0" width="11" height="15" rx="1.2" fill="#3cc47c"/><rect x="1.7" y="1.7" width="7.6" height="2.4" fill="#d6eadd"/><rect x="1.5" y="5.7" width="1.7" height="1.7" fill="#d6eadd"/><rect x="4.7" y="5.7" width="1.7" height="1.7" fill="#d6eadd"/><rect x="7.9" y="5.7" width="1.7" height="1.7" fill="#d6eadd"/><rect x="1.5" y="8.8" width="1.7" height="1.7" fill="#d6eadd"/><rect x="4.7" y="8.8" width="1.7" height="1.7" fill="#d6eadd"/><rect x="1.5" y="11.9" width="1.7" height="1.7" fill="#d6eadd"/><rect x="4.7" y="11.9" width="1.7" height="1.7" fill="#d6eadd"/><rect x="8.1" y="9" width="1.4" height="4.5" fill="#d6eadd"/></svg>
<div class="t" style="top:505.5px;line-height:20px;font-size:13px;color:#111;left:194px;">11/2021/3</div>
<svg style="left:278.6px;top:507.4px;" width="12.0" height="14.0" viewBox="0 0 12 14"><path d="M3.2 6V4.2a2.8 2.8 0 0 1 5.6 0V6" fill="none" stroke="#3cc47c" stroke-width="1.4"/><rect x="0.5" y="6" width="11" height="8" fill="#3cc47c"/></svg>
<div class="t" style="top:505.5px;line-height:20px;font-size:13px;color:#111;left:305px;">AB Group</div>
<div class="t" style="top:505.5px;line-height:20px;font-size:12.7px;color:#111;left:425px;width:300px;text-align:right;">700,00</div>
<div class="t" style="top:505.5px;line-height:20px;font-size:12.7px;color:#111;left:541px;width:300px;text-align:right;">847,00</div>
<div class="t" style="top:505.5px;line-height:20px;font-size:13px;color:#111;left:851px;">Kč</div>
<div class="a" style="left:899px;top:506.4px;width:17px;height:16.5px;background:#ffaa38;border:1px solid rgba(60,40,20,.26);"></div>
<svg style="left:935px;top:506.9px;" width="11" height="15" viewBox="0 0 11 15"><rect x="0" y="0" width="11" height="15" rx="1.2" fill="#3cc47c"/><rect x="1.7" y="1.7" width="7.6" height="2.4" fill="#d6eadd"/><rect x="1.5" y="5.7" width="1.7" height="1.7" fill="#d6eadd"/><rect x="4.7" y="5.7" width="1.7" height="1.7" fill="#d6eadd"/><rect x="7.9" y="5.7" width="1.7" height="1.7" fill="#d6eadd"/><rect x="1.5" y="8.8" width="1.7" height="1.7" fill="#d6eadd"/><rect x="4.7" y="8.8" width="1.7" height="1.7" fill="#d6eadd"/><rect x="1.5" y="11.9" width="1.7" height="1.7" fill="#d6eadd"/><rect x="4.7" y="11.9" width="1.7" height="1.7" fill="#d6eadd"/><rect x="8.1" y="9" width="1.4" height="4.5" fill="#d6eadd"/></svg>
<div class="t" style="top:527.5px;line-height:20px;font-size:13px;color:#111;left:194px;">11/2021/4</div>
<svg style="left:278.6px;top:529.4px;" width="12.0" height="14.0" viewBox="0 0 12 14"><path d="M3.2 6V4.2a2.8 2.8 0 0 1 5.6 0V6" fill="none" stroke="#3cc47c" stroke-width="1.4"/><rect x="0.5" y="6" width="11" height="8" fill="#3cc47c"/></svg>
<div class="t" style="top:527.5px;line-height:20px;font-size:13px;color:#111;left:305px;">AB Group</div>
<div class="t" style="top:527.5px;line-height:20px;font-size:12.7px;color:#111;left:425px;width:300px;text-align:right;">0,00</div>
<div class="t" style="top:527.5px;line-height:20px;font-size:12.7px;color:#111;left:541px;width:300px;text-align:right;">0,00</div>
<div class="t" style="top:527.5px;line-height:20px;font-size:13px;color:#111;left:851px;">Kč</div>
<div class="a" style="left:899px;top:528.4px;width:17px;height:16.5px;background:#ffaa38;border:1px solid rgba(60,40,20,.26);"></div>
<svg style="left:935px;top:528.9px;" width="11" height="15" viewBox="0 0 11 15"><rect x="0" y="0" width="11" height="15" rx="1.2" fill="#3cc47c"/><rect x="1.7" y="1.7" width="7.6" height="2.4" fill="#d6eadd"/><rect x="1.5" y="5.7" width="1.7" height="1.7" fill="#d6eadd"/><rect x="4.7" y="5.7" width="1.7" height="1.7" fill="#d6eadd"/><rect x="7.9" y="5.7" width="1.7" height="1.7" fill="#d6eadd"/><rect x="1.5" y="8.8" width="1.7" height="1.7" fill="#d6eadd"/><rect x="4.7" y="8.8" width="1.7" height="1.7" fill="#d6eadd"/><rect x="1.5" y="11.9" width="1.7" height="1.7" fill="#d6eadd"/><rect x="4.7" y="11.9" width="1.7" height="1.7" fill="#d6eadd"/><rect x="8.1" y="9" width="1.4" height="4.5" fill="#d6eadd"/></svg>
<div class="t" style="top:549.5px;line-height:20px;font-size:13px;color:#111;left:194px;">11/2021/5</div>
<svg style="left:278.6px;top:551.4px;" width="12.0" height="14.0" viewBox="0 0 12 14"><path d="M3.2 6V4.2a2.8 2.8 0 0 1 5.6 0V6" fill="none" stroke="#3cc47c" stroke-width="1.4"/><rect x="0.5" y="6" width="11" height="8" fill="#3cc47c"/></svg>
<div class="t" style="top:549.5px;line-height:20px;font-size:13px;color:#111;left:305px;">AB Group</div>
<div class="t" style="top:549.5px;line-height:20px;font-size:12.7px;color:#111;left:425px;width:300px;text-align:right;">1 000,00</div>
<div class="t" style="top:549.5px;line-height:20px;font-size:12.7px;color:#111;left:541px;width:300px;text-align:right;">1 210,00</div>
<div class="t" style="top:549.5px;line-height:20px;font-size:13px;color:#111;left:851px;">Kč</div>
<div class="a" style="left:899px;top:550.4px;width:17px;height:16.5px;background:#ffaa38;border:1px solid rgba(60,40,20,.26);"></div>
<svg style="left:935px;top:550.9px;" width="11" height="15" viewBox="0 0 11 15"><rect x="0" y="0" width="11" height="15" rx="1.2" fill="#3cc47c"/><rect x="1.7" y="1.7" width="7.6" height="2.4" fill="#d6eadd"/><rect x="1.5" y="5.7" width="1.7" height="1.7" fill="#d6eadd"/><rect x="4.7" y="5.7" width="1.7" height="1.7" fill="#d6eadd"/><rect x="7.9" y="5.7" width="1.7" height="1.7" fill="#d6eadd"/><rect x="1.5" y="8.8" width="1.7" height="1.7" fill="#d6eadd"/><rect x="4.7" y="8.8" width="1.7" height="1.7" fill="#d6eadd"/><rect x="1.5" y="11.9" width="1.7" height="1.7" fill="#d6eadd"/><rect x="4.7" y="11.9" width="1.7" height="1.7" fill="#d6eadd"/><rect x="8.1" y="9" width="1.4" height="4.5" fill="#d6eadd"/></svg>
<div class="t" style="top:571.5px;line-height:20px;font-size:13px;color:#111;left:194px;">11/2022/1</div>
<svg style="left:278.6px;top:573.4px;" width="12.0" height="14.0" viewBox="0 0 12 14"><path d="M3.2 6V4.2a2.8 2.8 0 0 1 5.6 0V6" fill="none" stroke="#3cc47c" stroke-width="1.4"/><rect x="0.5" y="6" width="11" height="8" fill="#3cc47c"/></svg>
<div class="t" style="top:571.5px;line-height:20px;font-size:13px;color:#111;left:305px;">AB Group</div>
<div class="t" style="top:571.5px;line-height:20px;font-size:12.7px;color:#111;left:425px;width:300px;text-align:right;">580,00</div>
<div class="t" style="top:571.5px;line-height:20px;font-size:12.7px;color:#111;left:541px;width:300px;text-align:right;">701,80</div>
<div class="t" style="top:571.5px;line-height:20px;font-size:13px;color:#111;left:851px;">Kč</div>
<div class="a" style="left:899px;top:572.4px;width:17px;height:16.5px;background:#ffaa38;border:1px solid rgba(60,40,20,.26);"></div>
<svg style="left:935px;top:572.9px;" width="11" height="15" viewBox="0 0 11 15"><rect x="0" y="0" width="11" height="15" rx="1.2" fill="#3cc47c"/><rect x="1.7" y="1.7" width="7.6" height="2.4" fill="#d6eadd"/><rect x="1.5" y="5.7" width="1.7" height="1.7" fill="#d6eadd"/><rect x="4.7" y="5.7" width="1.7" height="1.7" fill="#d6eadd"/><rect x="7.9" y="5.7" width="1.7" height="1.7" fill="#d6eadd"/><rect x="1.5" y="8.8" width="1.7" height="1.7" fill="#d6eadd"/><rect x="4.7" y="8.8" width="1.7" height="1.7" fill="#d6eadd"/><rect x="1.5" y="11.9" width="1.7" height="1.7" fill="#d6eadd"/><rect x="4.7" y="11.9" width="1.7" height="1.7" fill="#d6eadd"/><rect x="8.1" y="9" width="1.4" height="4.5" fill="#d6eadd"/></svg>
<div class="t" style="top:593.5px;line-height:20px;font-size:13px;color:#111;left:194px;">11/2022/2</div>
<svg style="left:278.6px;top:595.4px;" width="12.0" height="14.0" viewBox="0 0 12 14"><path d="M3.2 6V4.2a2.8 2.8 0 0 1 5.6 0V6" fill="none" stroke="#3cc47c" stroke-width="1.4"/><rect x="0.5" y="6" width="11" height="8" fill="#3cc47c"/></svg>
<div class="t" style="top:593.5px;line-height:20px;font-size:13px;color:#111;left:305px;">AB Group</div>
<div class="t" style="top:593.5px;line-height:20px;font-size:12.7px;color:#111;left:425px;width:300px;text-align:right;">712,00</div>
<div class="t" style="top:593.5px;line-height:20px;font-size:12.7px;color:#111;left:541px;width:300px;text-align:right;">861,52</div>
<div class="t" style="top:593.5px;line-height:20px;font-size:13px;color:#111;left:851px;">Kč</div>
<div class="a" style="left:899px;top:594.4px;width:17px;height:16.5px;background:#ffaa38;border:1px solid rgba(60,40,20,.26);"></div>
<svg style="left:935px;top:594.9px;" width="11" height="15" viewBox="0 0 11 15"><rect x="0" y="0" width="11" height="15" rx="1.2" fill="#3cc47c"/><rect x="1.7" y="1.7" width="7.6" height="2.4" fill="#d6eadd"/><rect x="1.5" y="5.7" width="1.7" height="1.7" fill="#d6eadd"/><rect x="4.7" y="5.7" width="1.7" height="1.7" fill="#d6eadd"/><rect x="7.9" y="5.7" width="1.7" height="1.7" fill="#d6eadd"/><rect x="1.5" y="8.8" width="1.7" height="1.7" fill="#d6eadd"/><rect x="4.7" y="8.8" width="1.7" height="1.7" fill="#d6eadd"/><rect x="1.5" y="11.9" width="1.7" height="1.7" fill="#d6eadd"/><rect x="4.7" y="11.9" width="1.7" height="1.7" fill="#d6eadd"/><rect x="8.1" y="9" width="1.4" height="4.5" fill="#d6eadd"/></svg>
<div class="t" style="top:615.5px;line-height:20px;font-size:13px;color:#111;left:194px;">11/2023/1</div>
<svg style="left:278.6px;top:617.4px;" width="12.0" height="14.0" viewBox="0 0 12 14"><path d="M3.2 6V4.2a2.8 2.8 0 0 1 5.6 0V6" fill="none" stroke="#3cc47c" stroke-width="1.4"/><rect x="0.5" y="6" width="11" height="8" fill="#3cc47c"/></svg>
<div class="t" style="top:615.5px;line-height:20px;font-size:13px;color:#111;left:305px;">AB Group</div>
<div class="t" style="top:615.5px;line-height:20px;font-size:12.7px;color:#111;left:425px;width:300px;text-align:right;">127,00</div>
<div class="t" style="top:615.5px;line-height:20px;font-size:12.7px;color:#111;left:541px;width:300px;text-align:right;">153,67</div>
<div class="t" style="top:615.5px;line-height:20px;font-size:13px;color:#111;left:851px;">Kč</div>
<div class="a" style="left:899px;top:616.4px;width:17px;height:16.5px;background:#ffaa38;border:1px solid rgba(60,40,20,.26);"></div>
<svg style="left:935px;top:616.9px;" width="11" height="15" viewBox="0 0 11 15"><rect x="0" y="0" width="11" height="15" rx="1.2" fill="#3cc47c"/><rect x="1.7" y="1.7" width="7.6" height="2.4" fill="#d6eadd"/><rect x="1.5" y="5.7" width="1.7" height="1.7" fill="#d6eadd"/><rect x="4.7" y="5.7" width="1.7" height="1.7" fill="#d6eadd"/><rect x="7.9" y="5.7" width="1.7" height="1.7" fill="#d6eadd"/><rect x="1.5" y="8.8" width="1.7" height="1.7" fill="#d6eadd"/><rect x="4.7" y="8.8" width="1.7" height="1.7" fill="#d6eadd"/><rect x="1.5" y="11.9" width="1.7" height="1.7" fill="#d6eadd"/><rect x="4.7" y="11.9" width="1.7" height="1.7" fill="#d6eadd"/><rect x="8.1" y="9" width="1.4" height="4.5" fill="#d6eadd"/></svg>
<div class="t" style="top:637.5px;line-height:20px;font-size:13px;color:#111;left:194px;">11/2023/3</div>
<svg style="left:278.6px;top:639.4px;" width="12.0" height="14.0" viewBox="0 0 12 14"><path d="M3.2 6V4.2a2.8 2.8 0 0 1 5.6 0V6" fill="none" stroke="#3cc47c" stroke-width="1.4"/><rect x="0.5" y="6" width="11" height="8" fill="#3cc47c"/></svg>
<div class="t" style="top:637.5px;line-height:20px;font-size:13px;color:#111;left:305px;">AB Group</div>
<div class="t" style="top:637.5px;line-height:20px;font-size:12.7px;color:#111;left:425px;width:300px;text-align:right;">040,00</div>
<div class="t" style="top:637.5px;line-height:20px;font-size:12.7px;color:#111;left:541px;width:300px;text-align:right;">048,40</div>
<div class="t" style="top:637.5px;line-height:20px;font-size:13px;color:#111;left:851px;">Kč</div>
<div class="a" style="left:899px;top:638.4px;width:17px;height:16.5px;background:#ffaa38;border:1px solid rgba(60,40,20,.26);"></div>
<svg style="left:935px;top:638.9px;" width="11" height="15" viewBox="0 0 11 15"><rect x="0" y="0" width="11" height="15" rx="1.2" fill="#3cc47c"/><rect x="1.7" y="1.7" width="7.6" height="2.4" fill="#d6eadd"/><rect x="1.5" y="5.7" width="1.7" height="1.7" fill="#d6eadd"/><rect x="4.7" y="5.7" width="1.7" height="1.7" fill="#d6eadd"/><rect x="7.9" y="5.7" width="1.7" height="1.7" fill="#d6eadd"/><rect x="1.5" y="8.8" width="1.7" height="1.7" fill="#d6eadd"/><rect x="4.7" y="8.8" width="1.7" height="1.7" fill="#d6eadd"/><rect x="1.5" y="11.9" width="1.7" height="1.7" fill="#d6eadd"/><rect x="4.7" y="11.9" width="1.7" height="1.7" fill="#d6eadd"/><rect x="8.1" y="9" width="1.4" height="4.5" fill="#d6eadd"/></svg>
<div class="t" style="top:659.5px;line-height:20px;font-size:13px;color:#111;left:112px;">11/2021/8</div>
<div class="t" style="top:659.5px;line-height:20px;font-size:13px;color:#111;left:194px;">11/2023/4</div>
<svg style="left:278.6px;top:661.4px;" width="12.0" height="14.0" viewBox="0 0 12 14"><path d="M3.2 6V4.2a2.8 2.8 0 0 1 5.6 0V6" fill="none" stroke="#3cc47c" stroke-width="1.4"/><rect x="0.5" y="6" width="11" height="8" fill="#3cc47c"/></svg>
<div class="t" style="top:659.5px;line-height:20px;font-size:13px;color:#111;left:305px;">Roffeny Havířov</div>
<div class="t" style="top:659.5px;line-height:20px;font-size:12.7px;color:#111;left:425px;width:300px;text-align:right;">1 978 720,00</div>
<div class="t" style="top:659.5px;line-height:20px;font-size:12.7px;color:#111;left:541px;width:300px;text-align:right;">2 394 251,20</div>
<div class="t" style="top:659.5px;line-height:20px;font-size:13px;color:#111;left:851px;">Kč</div>
<div class="a" style="left:899px;top:660.4px;width:17px;height:16.5px;background:#ffaa38;border:1px solid rgba(60,40,20,.26);"></div>
<svg style="left:935px;top:660.9px;" width="11" height="15" viewBox="0 0 11 15"><rect x="0" y="0" width="11" height="15" rx="1.2" fill="#3cc47c"/><rect x="1.7" y="1.7" width="7.6" height="2.4" fill="#d6eadd"/><rect x="1.5" y="5.7" width="1.7" height="1.7" fill="#d6eadd"/><rect x="4.7" y="5.7" width="1.7" height="1.7" fill="#d6eadd"/><rect x="7.9" y="5.7" width="1.7" height="1.7" fill="#d6eadd"/><rect x="1.5" y="8.8" width="1.7" height="1.7" fill="#d6eadd"/><rect x="4.7" y="8.8" width="1.7" height="1.7" fill="#d6eadd"/><rect x="1.5" y="11.9" width="1.7" height="1.7" fill="#d6eadd"/><rect x="4.7" y="11.9" width="1.7" height="1.7" fill="#d6eadd"/><rect x="8.1" y="9" width="1.4" height="4.5" fill="#d6eadd"/></svg>
<div class="t" style="top:681.5px;line-height:20px;font-size:13px;color:#111;left:112px;">11/2023/1</div>
<div class="t" style="top:681.5px;line-height:20px;font-size:13px;color:#111;left:194px;">11/2023/5</div>
<div class="t" style="top:681.5px;line-height:20px;font-size:13px;color:#111;left:305px;">Demonstrační firma Bik...</div>
<div class="t" style="top:681.5px;line-height:20px;font-size:12.7px;color:#111;left:425px;width:300px;text-align:right;">15 000,00</div>
<div class="t" style="top:681.5px;line-height:20px;font-size:12.7px;color:#111;left:541px;width:300px;text-align:right;">18 150,00</div>
<div class="t" style="top:681.5px;line-height:20px;font-size:13px;color:#111;left:851px;">Kč</div>
<div class="a" style="left:899px;top:682.4px;width:17px;height:16.5px;background:#ffaa38;border:1px solid rgba(60,40,20,.26);"></div>
<svg style="left:935px;top:682.9px;" width="11" height="15" viewBox="0 0 11 15"><rect x="0" y="0" width="11" height="15" rx="1.2" fill="#3cc47c"/><rect x="1.7" y="1.7" width="7.6" height="2.4" fill="#d6eadd"/><rect x="1.5" y="5.7" width="1.7" height="1.7" fill="#d6eadd"/><rect x="4.7" y="5.7" width="1.7" height="1.7" fill="#d6eadd"/><rect x="7.9" y="5.7" width="1.7" height="1.7" fill="#d6eadd"/><rect x="1.5" y="8.8" width="1.7" height="1.7" fill="#d6eadd"/><rect x="4.7" y="8.8" width="1.7" height="1.7" fill="#d6eadd"/><rect x="1.5" y="11.9" width="1.7" height="1.7" fill="#d6eadd"/><rect x="4.7" y="11.9" width="1.7" height="1.7" fill="#d6eadd"/><rect x="8.1" y="9" width="1.4" height="4.5" fill="#d6eadd"/></svg>
<div class="t" style="top:703.5px;line-height:20px;font-size:13px;color:#111;left:112px;">11/2023/2</div>
<div class="t" style="top:703.5px;line-height:20px;font-size:13px;color:#111;left:194px;">11/2023/6</div>
<div class="t" style="top:703.5px;line-height:20px;font-size:13px;color:#111;left:305px;">Demonstrační firma Bik...</div>
<div class="t" style="top:703.5px;line-height:20px;font-size:12.7px;color:#111;left:425px;width:300px;text-align:right;">15 000,00</div>
<div class="t" style="top:703.5px;line-height:20px;font-size:12.7px;color:#111;left:541px;width:300px;text-align:right;">18 150,00</div>
<div class="t" style="top:703.5px;line-height:20px;font-size:13px;color:#111;left:851px;">Kč</div>
<div class="a" style="left:899px;top:704.4px;width:17px;height:16.5px;background:#ffaa38;border:1px solid rgba(60,40,20,.26);"></div>
<svg style="left:935px;top:704.9px;" width="11" height="15" viewBox="0 0 11 15"><rect x="0" y="0" width="11" height="15" rx="1.2" fill="#3cc47c"/><rect x="1.7" y="1.7" width="7.6" height="2.4" fill="#d6eadd"/><rect x="1.5" y="5.7" width="1.7" height="1.7" fill="#d6eadd"/><rect x="4.7" y="5.7" width="1.7" height="1.7" fill="#d6eadd"/><rect x="7.9" y="5.7" width="1.7" height="1.7" fill="#d6eadd"/><rect x="1.5" y="8.8" width="1.7" height="1.7" fill="#d6eadd"/><rect x="4.7" y="8.8" width="1.7" height="1.7" fill="#d6eadd"/><rect x="1.5" y="11.9" width="1.7" height="1.7" fill="#d6eadd"/><rect x="4.7" y="11.9" width="1.7" height="1.7" fill="#d6eadd"/><rect x="8.1" y="9" width="1.4" height="4.5" fill="#d6eadd"/></svg>
<div class="t" style="top:725.5px;line-height:20px;font-size:13px;color:#111;left:194px;">11/2023/7</div>
<svg style="left:278.6px;top:727.4px;" width="12.0" height="14.0" viewBox="0 0 12 14"><path d="M3.2 6V4.2a2.8 2.8 0 0 1 5.6 0V6" fill="none" stroke="#3cc47c" stroke-width="1.4"/><rect x="0.5" y="6" width="11" height="8" fill="#3cc47c"/></svg>
<div class="t" style="top:725.5px;line-height:20px;font-size:13px;color:#111;left:305px;">OMEGA s.r.o.</div>
<div class="t" style="top:725.5px;line-height:20px;font-size:13px;color:#111;left:461px;">Administrativní budova</div>
<div class="t" style="top:725.5px;line-height:20px;font-size:12.7px;color:#111;left:425px;width:300px;text-align:right;">2 357 400,00</div>
<div class="t" style="top:725.5px;line-height:20px;font-size:12.7px;color:#111;left:541px;width:300px;text-align:right;">2 852 454,00</div>
<div class="t" style="top:725.5px;line-height:20px;font-size:13px;color:#111;left:851px;">Kč</div>
<div class="a" style="left:899px;top:726.4px;width:17px;height:16.5px;background:#f25454;border:1px solid rgba(60,40,20,.26);"></div>
<svg style="left:935px;top:726.9px;" width="11" height="15" viewBox="0 0 11 15"><rect x="0" y="0" width="11" height="15" rx="1.2" fill="#3cc47c"/><rect x="1.7" y="1.7" width="7.6" height="2.4" fill="#d6eadd"/><rect x="1.5" y="5.7" width="1.7" height="1.7" fill="#d6eadd"/><rect x="4.7" y="5.7" width="1.7" height="1.7" fill="#d6eadd"/><rect x="7.9" y="5.7" width="1.7" height="1.7" fill="#d6eadd"/><rect x="1.5" y="8.8" width="1.7" height="1.7" fill="#d6eadd"/><rect x="4.7" y="8.8" width="1.7" height="1.7" fill="#d6eadd"/><rect x="1.5" y="11.9" width="1.7" height="1.7" fill="#d6eadd"/><rect x="4.7" y="11.9" width="1.7" height="1.7" fill="#d6eadd"/><rect x="8.1" y="9" width="1.4" height="4.5" fill="#d6eadd"/></svg>
<div class="t" style="top:747.5px;line-height:20px;font-size:13px;color:#111;left:112px;">11/2023/3</div>
<div class="t" style="top:747.5px;line-height:20px;font-size:13px;color:#111;left:194px;">11/2023/8</div>
<svg style="left:278.6px;top:749.4px;" width="12.0" height="14.0" viewBox="0 0 12 14"><path d="M3.2 6V4.2a2.8 2.8 0 0 1 5.6 0V6" fill="none" stroke="#3cc47c" stroke-width="1.4"/><rect x="0.5" y="6" width="11" height="8" fill="#3cc47c"/></svg>
<div class="t" style="top:747.5px;line-height:20px;font-size:13px;color:#111;left:305px;">PQM s.r.o</div>
<div class="t" style="top:747.5px;line-height:20px;font-size:12.7px;color:#111;left:425px;width:300px;text-align:right;">2 840,00</div>
<div class="t" style="top:747.5px;line-height:20px;font-size:12.7px;color:#111;left:541px;width:300px;text-align:right;">3 436,40</div>
<div class="t" style="top:747.5px;line-height:20px;font-size:13px;color:#111;left:851px;">Kč</div>
<div class="a" style="left:899px;top:748.4px;width:17px;height:16.5px;background:#f25454;border:1px solid rgba(60,40,20,.26);"></div>
<div class="t" style="top:769.5px;line-height:20px;font-size:13px;color:#111;left:194px;">11/2023/9</div>
<svg style="left:278.6px;top:771.4px;" width="12.0" height="14.0" viewBox="0 0 12 14"><path d="M3.2 6V4.2a2.8 2.8 0 0 1 5.6 0V6" fill="none" stroke="#3cc47c" stroke-width="1.4"/><rect x="0.5" y="6" width="11" height="8" fill="#3cc47c"/></svg>
<div class="t" style="top:769.5px;line-height:20px;font-size:13px;color:#111;left:305px;">Čokoládovny a.s.</div>
<div class="t" style="top:769.5px;line-height:20px;font-size:12.7px;color:#111;left:425px;width:300px;text-align:right;">1 000,00</div>
<div class="t" style="top:769.5px;line-height:20px;font-size:12.7px;color:#111;left:541px;width:300px;text-align:right;">1 210,00</div>
<div class="t" style="top:769.5px;line-height:20px;font-size:13px;color:#111;left:851px;">Kč</div>
<div class="a" style="left:899px;top:770.4px;width:17px;height:16.5px;background:#ffaa38;border:1px solid rgba(60,40,20,.26);"></div>
<svg style="left:935px;top:770.9px;" width="11" height="15" viewBox="0 0 11 15"><rect x="0" y="0" width="11" height="15" rx="1.2" fill="#3cc47c"/><rect x="1.7" y="1.7" width="7.6" height="2.4" fill="#d6eadd"/><rect x="1.5" y="5.7" width="1.7" height="1.7" fill="#d6eadd"/><rect x="4.7" y="5.7" width="1.7" height="1.7" fill="#d6eadd"/><rect x="7.9" y="5.7" width="1.7" height="1.7" fill="#d6eadd"/><rect x="1.5" y="8.8" width="1.7" height="1.7" fill="#d6eadd"/><rect x="4.7" y="8.8" width="1.7" height="1.7" fill="#d6eadd"/><rect x="1.5" y="11.9" width="1.7" height="1.7" fill="#d6eadd"/><rect x="4.7" y="11.9" width="1.7" height="1.7" fill="#d6eadd"/><rect x="8.1" y="9" width="1.4" height="4.5" fill="#d6eadd"/></svg>
<div class="t" style="top:791.5px;line-height:20px;font-size:13px;color:#111;left:194px;">11/2023/10</div>
<svg style="left:278.6px;top:793.4px;" width="12.0" height="14.0" viewBox="0 0 12 14"><path d="M3.2 6V4.2a2.8 2.8 0 0 1 5.6 0V6" fill="none" stroke="#3cc47c" stroke-width="1.4"/><rect x="0.5" y="6" width="11" height="8" fill="#3cc47c"/></svg>
<div class="t" style="top:791.5px;line-height:20px;font-size:13px;color:#111;left:305px;">Computer Group, spol....</div>
<div class="t" style="top:791.5px;line-height:20px;font-size:12.7px;color:#111;left:425px;width:300px;text-align:right;">5 000,00</div>
<div class="t" style="top:791.5px;line-height:20px;font-size:12.7px;color:#111;left:541px;width:300px;text-align:right;">6 050,00</div>
<div class="t" style="top:791.5px;line-height:20px;font-size:13px;color:#111;left:851px;">Kč</div>
<div class="a" style="left:899px;top:792.4px;width:17px;height:16.5px;background:#ffaa38;border:1px solid rgba(60,40,20,.26);"></div>
<svg style="left:935px;top:792.9px;" width="11" height="15" viewBox="0 0 11 15"><rect x="0" y="0" width="11" height="15" rx="1.2" fill="#3cc47c"/><rect x="1.7" y="1.7" width="7.6" height="2.4" fill="#d6eadd"/><rect x="1.5" y="5.7" width="1.7" height="1.7" fill="#d6eadd"/><rect x="4.7" y="5.7" width="1.7" height="1.7" fill="#d6eadd"/><rect x="7.9" y="5.7" width="1.7" height="1.7" fill="#d6eadd"/><rect x="1.5" y="8.8" width="1.7" height="1.7" fill="#d6eadd"/><rect x="4.7" y="8.8" width="1.7" height="1.7" fill="#d6eadd"/><rect x="1.5" y="11.9" width="1.7" height="1.7" fill="#d6eadd"/><rect x="4.7" y="11.9" width="1.7" height="1.7" fill="#d6eadd"/><rect x="8.1" y="9" width="1.4" height="4.5" fill="#d6eadd"/></svg>
<div class="t" style="top:813.5px;line-height:20px;font-size:13px;color:#111;left:194px;">11/2023/11</div>
<svg style="left:278.6px;top:815.4px;" width="12.0" height="14.0" viewBox="0 0 12 14"><path d="M3.2 6V4.2a2.8 2.8 0 0 1 5.6 0V6" fill="none" stroke="#3cc47c" stroke-width="1.4"/><rect x="0.5" y="6" width="11" height="8" fill="#3cc47c"/></svg>
<div class="t" style="top:813.5px;line-height:20px;font-size:13px;color:#111;left:305px;">AB Group</div>
<div class="t" style="top:813.5px;line-height:20px;font-size:13px;color:#111;left:461px;">Faktura přijatá - zaúčto...</div>
<div class="t" style="top:813.5px;line-height:20px;font-size:12.7px;color:#111;left:425px;width:300px;text-align:right;">180,00</div>
<div class="t" style="top:813.5px;line-height:20px;font-size:12.7px;color:#111;left:541px;width:300px;text-align:right;">217,80</div>
<div class="t" style="top:813.5px;line-height:20px;font-size:13px;color:#111;left:851px;">Kč</div>
<div class="a" style="left:899px;top:814.4px;width:17px;height:16.5px;background:#c9c9c9;border:1px solid rgba(60,40,20,.26);"></div>
<svg style="left:935px;top:814.9px;" width="11" height="15" viewBox="0 0 11 15"><rect x="0" y="0" width="11" height="15" rx="1.2" fill="#3cc47c"/><rect x="1.7" y="1.7" width="7.6" height="2.4" fill="#d6eadd"/><rect x="1.5" y="5.7" width="1.7" height="1.7" fill="#d6eadd"/><rect x="4.7" y="5.7" width="1.7" height="1.7" fill="#d6eadd"/><rect x="7.9" y="5.7" width="1.7" height="1.7" fill="#d6eadd"/><rect x="1.5" y="8.8" width="1.7" height="1.7" fill="#d6eadd"/><rect x="4.7" y="8.8" width="1.7" height="1.7" fill="#d6eadd"/><rect x="1.5" y="11.9" width="1.7" height="1.7" fill="#d6eadd"/><rect x="4.7" y="11.9" width="1.7" height="1.7" fill="#d6eadd"/><rect x="8.1" y="9" width="1.4" height="4.5" fill="#d6eadd"/></svg>
<div class="t" style="top:835.5px;line-height:20px;font-size:13px;color:#111;left:194px;">11/2023/12</div>
<svg style="left:278.6px;top:837.4px;" width="12.0" height="14.0" viewBox="0 0 12 14"><path d="M3.2 6V4.2a2.8 2.8 0 0 1 5.6 0V6" fill="none" stroke="#3cc47c" stroke-width="1.4"/><rect x="0.5" y="6" width="11" height="8" fill="#3cc47c"/></svg>
<div class="t" style="top:835.5px;line-height:20px;font-size:13px;color:#111;left:305px;">AB Group</div>
<div class="t" style="top:835.5px;line-height:20px;font-size:13px;color:#111;left:461px;">Faktura přijatá - zaúčto...</div>
<div class="t" style="top:835.5px;line-height:20px;font-size:12.7px;color:#111;left:425px;width:300px;text-align:right;">180,00</div>
<div class="t" style="top:835.5px;line-height:20px;font-size:12.7px;color:#111;left:541px;width:300px;text-align:right;">217,80</div>
<div class="t" style="top:835.5px;line-height:20px;font-size:13px;color:#111;left:851px;">Kč</div>
<div class="a" style="left:899px;top:836.4px;width:17px;height:16.5px;background:#c9c9c9;border:1px solid rgba(60,40,20,.26);"></div>
<svg style="left:935px;top:836.9px;" width="11" height="15" viewBox="0 0 11 15"><rect x="0" y="0" width="11" height="15" rx="1.2" fill="#3cc47c"/><rect x="1.7" y="1.7" width="7.6" height="2.4" fill="#d6eadd"/><rect x="1.5" y="5.7" width="1.7" height="1.7" fill="#d6eadd"/><rect x="4.7" y="5.7" width="1.7" height="1.7" fill="#d6eadd"/><rect x="7.9" y="5.7" width="1.7" height="1.7" fill="#d6eadd"/><rect x="1.5" y="8.8" width="1.7" height="1.7" fill="#d6eadd"/><rect x="4.7" y="8.8" width="1.7" height="1.7" fill="#d6eadd"/><rect x="1.5" y="11.9" width="1.7" height="1.7" fill="#d6eadd"/><rect x="4.7" y="11.9" width="1.7" height="1.7" fill="#d6eadd"/><rect x="8.1" y="9" width="1.4" height="4.5" fill="#d6eadd"/></svg>
<div class="t" style="top:857.5px;line-height:20px;font-size:13px;color:#111;left:194px;">11/2023/13</div>
<svg style="left:278.6px;top:859.4px;" width="12.0" height="14.0" viewBox="0 0 12 14"><path d="M3.2 6V4.2a2.8 2.8 0 0 1 5.6 0V6" fill="none" stroke="#3cc47c" stroke-width="1.4"/><rect x="0.5" y="6" width="11" height="8" fill="#3cc47c"/></svg>
<div class="t" style="top:857.5px;line-height:20px;font-size:13px;color:#111;left:305px;">Československá obcho...</div>
<div class="t" style="top:857.5px;line-height:20px;font-size:12.7px;color:#111;left:425px;width:300px;text-align:right;">500,00</div>
<div class="t" style="top:857.5px;line-height:20px;font-size:12.7px;color:#111;left:541px;width:300px;text-align:right;">605,00</div>
<div class="t" style="top:857.5px;line-height:20px;font-size:13px;color:#111;left:851px;">Kč</div>
<div class="a" style="left:899px;top:858.4px;width:17px;height:16.5px;background:#ffaa38;border:1px solid rgba(60,40,20,.26);"></div>
<svg style="left:935px;top:858.9px;" width="11" height="15" viewBox="0 0 11 15"><rect x="0" y="0" width="11" height="15" rx="1.2" fill="#3cc47c"/><rect x="1.7" y="1.7" width="7.6" height="2.4" fill="#d6eadd"/><rect x="1.5" y="5.7" width="1.7" height="1.7" fill="#d6eadd"/><rect x="4.7" y="5.7" width="1.7" height="1.7" fill="#d6eadd"/><rect x="7.9" y="5.7" width="1.7" height="1.7" fill="#d6eadd"/><rect x="1.5" y="8.8" width="1.7" height="1.7" fill="#d6eadd"/><rect x="4.7" y="8.8" width="1.7" height="1.7" fill="#d6eadd"/><rect x="1.5" y="11.9" width="1.7" height="1.7" fill="#d6eadd"/><rect x="4.7" y="11.9" width="1.7" height="1.7" fill="#d6eadd"/><rect x="8.1" y="9" width="1.4" height="4.5" fill="#d6eadd"/></svg>
<div class="a" style="left:79px;top:217px;width:875px;height:1px;background:#b8b8b8;"></div>
<div class="a" style="left:79px;top:239px;width:875px;height:1px;background:#b8b8b8;"></div>
<div class="a" style="left:79px;top:261px;width:875px;height:1px;background:#b8b8b8;"></div>
<div class="a" style="left:79px;top:283px;width:875px;height:1px;background:#b8b8b8;"></div>
<div class="a" style="left:79px;top:305px;width:875px;height:1px;background:#b8b8b8;"></div>
<div class="a" style="left:79px;top:327px;width:875px;height:1px;background:#b8b8b8;"></div>
<div class="a" style="left:79px;top:349px;width:875px;height:1px;background:#b8b8b8;"></div>
<div class="a" style="left:79px;top:371px;width:875px;height:1px;background:#b8b8b8;"></div>
<div class="a" style="left:79px;top:393px;width:875px;height:1px;background:#b8b8b8;"></div>
<div class="a" style="left:79px;top:415px;width:875px;height:1px;background:#b8b8b8;"></div>
<div class="a" style="left:79px;top:437px;width:875px;height:1px;background:#b8b8b8;"></div>
<div class="a" style="left:79px;top:459px;width:875px;height:1px;background:#b8b8b8;"></div>
<div class="a" style="left:79px;top:481px;width:875px;height:1px;background:#b8b8b8;"></div>
<div class="a" style="left:79px;top:503px;width:875px;height:1px;background:#b8b8b8;"></div>
<div class="a" style="left:79px;top:525px;width:875px;height:1px;background:#b8b8b8;"></div>
<div class="a" style="left:79px;top:547px;width:875px;height:1px;background:#b8b8b8;"></div>
<div class="a" style="left:79px;top:569px;width:875px;height:1px;background:#b8b8b8;"></div>
<div class="a" style="left:79px;top:591px;width:875px;height:1px;background:#b8b8b8;"></div>
<div class="a" style="left:79px;top:613px;width:875px;height:1px;background:#b8b8b8;"></div>
<div class="a" style="left:79px;top:635px;width:875px;height:1px;background:#b8b8b8;"></div>
<div class="a" style="left:79px;top:657px;width:875px;height:1px;background:#b8b8b8;"></div>
<div class="a" style="left:79px;top:679px;width:875px;height:1px;background:#b8b8b8;"></div>
<div class="a" style="left:79px;top:701px;width:875px;height:1px;background:#b8b8b8;"></div>
<div class="a" style="left:79px;top:723px;width:875px;height:1px;background:#b8b8b8;"></div>
<div class="a" style="left:79px;top:745px;width:875px;height:1px;background:#b8b8b8;"></div>
<div class="a" style="left:79px;top:767px;width:875px;height:1px;background:#b8b8b8;"></div>
<div class="a" style="left:79px;top:789px;width:875px;height:1px;background:#b8b8b8;"></div>
<div class="a" style="left:79px;top:811px;width:875px;height:1px;background:#b8b8b8;"></div>
<div class="a" style="left:79px;top:833px;width:875px;height:1px;background:#b8b8b8;"></div>
<div class="a" style="left:79px;top:855px;width:875px;height:1px;background:#b8b8b8;"></div>
<div class="a" style="left:79px;top:877px;width:875px;height:1px;background:#b8b8b8;"></div>
<div class="a" style="left:106px;top:196px;width:1px;height:682px;background:#b8b8b8;"></div>
<div class="a" style="left:188px;top:196px;width:1px;height:682px;background:#b8b8b8;"></div>
<div class="a" style="left:270px;top:196px;width:1px;height:682px;background:#b8b8b8;"></div>
<div class="a" style="left:299px;top:196px;width:1px;height:682px;background:#b8b8b8;"></div>
<div class="a" style="left:455px;top:196px;width:1px;height:682px;background:#b8b8b8;"></div>
<div class="a" style="left:614px;top:196px;width:1px;height:682px;background:#b8b8b8;"></div>
<div class="a" style="left:730px;top:196px;width:1px;height:682px;background:#b8b8b8;"></div>
<div class="a" style="left:846px;top:196px;width:1px;height:682px;background:#b8b8b8;"></div>
<div class="a" style="left:889px;top:196px;width:1px;height:682px;background:#b8b8b8;"></div>
<div class="a" style="left:926px;top:196px;width:1px;height:682px;background:#b8b8b8;"></div>
<div class="a" style="left:954px;top:196px;width:1px;height:682px;background:#b8b8b8;"></div>
<div class="a" style="left:955px;top:196px;width:19px;height:688px;background:#cdcdcd;"></div>
<div class="a" style="left:957px;top:867px;width:17px;height:17px;background:#f2f2f2;"></div>
<svg style="left:961px;top:873px;" width="9" height="6" viewBox="0 0 9 6"><path d="M0.5 0.5L4.5 4.5L8.5 0.5" fill="none" stroke="#4a4a4a" stroke-width="1.9"/></svg>
<div class="a" style="left:79px;top:878px;width:876px;height:6px;background:#d8d8d8;"></div>
<div class="a" style="left:79px;top:884px;width:895px;height:1px;background:#8e8e8e;"></div>
<div class="a" style="left:79px;top:886px;width:23px;height:23px;background:#c4c4c4;border:1px solid #5a5a5a;box-shadow:inset 0 0 0 0.5px #5a5a5a;"></div>
<svg style="left:82px;top:891px;" width="17" height="13" viewBox="0 0 14 11"><path d="M7 1.5C5.5 0.3 2.5 0.3 0.5 1V10C2.5 9.3 5.5 9.3 7 10.5C8.5 9.3 11.5 9.3 13.5 10V1C11.5 0.3 8.5 0.3 7 1.5V10.5" fill="none" stroke="#1a56a6" stroke-width="1.1"/></svg>
<svg style="left:108px;top:891px;" width="14" height="13" viewBox="0 0 19 17"><rect x="0.6" y="0.6" width="17.8" height="3.6" fill="none" stroke="#1a56a6" stroke-width="1.2"/><path d="M0.6 4.2V16.4H18.4V4.2M7.3 6.6H11.7" fill="none" stroke="#1a56a6" stroke-width="1.2"/></svg>
<svg style="left:133px;top:890px;" width="13" height="14" viewBox="0 0 13 14"><path d="M0.6 0.6H12.4L8 6.5V13L5 11V6.5Z" fill="none" stroke="#1a56a6" stroke-width="1.1"/></svg>
<svg style="left:145px;top:903px;" width="5" height="3" viewBox="0 0 5 3"><path d="M0 0H5L2.5 3Z" fill="#1a56a6"/></svg>
<div class="a" style="left:152px;top:887px;width:1px;height:21px;background:#b0b0b0;"></div>
<svg style="left:157px;top:890px;" width="15" height="15" viewBox="0 0 15 15"><path d="M7.5 0V15M1 3.7L14 11.3M14 3.7L1 11.3M5.5 1L7.5 3L9.5 1M5.5 14L7.5 12L9.5 14M0.6 6.3L3.3 5L2.8 2.2M14.4 6.3L11.7 5L12.2 2.2M0.6 8.7L3.3 10L2.8 12.8M14.4 8.7L11.7 10L12.2 12.8" fill="none" stroke="#1a56a6" stroke-width="1"/></svg>
<div class="t" style="top:888px;line-height:20px;font-size:12px;color:#14459a;left:181px;">0</div>
<div class="a" style="left:194px;top:887px;width:1px;height:21px;background:#b0b0b0;"></div>
<div class="t" style="top:888px;line-height:20px;font-size:12px;color:#14459a;left:201px;">Počet záznamů</div>
<div class="a" style="left:288px;top:887px;width:1px;height:21px;background:#b0b0b0;"></div>
<div class="a" style="left:922px;top:887px;width:1px;height:21px;background:#a8a8a8;"></div>
<div class="t" style="top:887.5px;line-height:20px;font-size:18px;color:#1a56a6;left:925.5px;width:20px;text-align:center;">Σ</div>
<div class="a" style="left:948px;top:887px;width:1px;height:21px;background:#a8a8a8;"></div>
<svg style="left:955px;top:890px;" width="15" height="15" viewBox="0 0 15 15"><path d="M1 12L2 8.5L10 0.8L12.8 3.5L4.8 11.2Z M2 8.5L4.8 11.2M8 14.4H14" fill="none" stroke="#1a56a6" stroke-width="1.1"/></svg>
<div class="a" style="left:646px;top:920.4px;width:28px;height:1.6px;background:repeating-linear-gradient(90deg,#3a3a5a 0 1.6px,#c08a50 1.6px 2.4px,transparent 2.4px 3.2px);"></div>
<div class="a" style="left:679px;top:920.4px;width:15px;height:1.6px;background:repeating-linear-gradient(90deg,#3a3a5a 0 1.6px,#c08a50 1.6px 2.4px,transparent 2.4px 3.2px);"></div>
<div class="a" style="left:985px;top:33.5px;width:7px;height:884.5px;background:#0091ca;"></div>
<div class="a" style="left:995px;top:33.5px;width:242px;height:884.5px;background:#00468c;"></div>
<div class="t" style="top:47px;line-height:20px;font-size:20px;color:#fff;left:1002px;">Faktura 11/2020/6</div>
<svg style="left:1214px;top:48px;" width="15" height="14" viewBox="0 0 15 14"><path d="M6.7 4.6H1.1V13H11V8.9" fill="none" stroke="#e8eef6" stroke-width="1.2"/><path d="M7.3 1.1H13.7V7.9M13.3 1.5L5.6 8.6" fill="none" stroke="#e8eef6" stroke-width="1.2"/></svg>
<div class="a" style="left:998px;top:76px;width:236px;height:25px;background:#0091ca;"></div>
<div class="t" style="top:79.6px;line-height:20px;font-size:13px;color:#fff;font-weight:bold;left:1002px;">Základní údaje</div>
<div class="a" style="left:1209px;top:78px;width:1px;height:21px;background:#0a7fb5;"></div>
<svg style="left:1215px;top:85px;" width="13" height="7" viewBox="0 0 13 7"><path d="M0.5 6.5L6.5 0.5L12.5 6.5" fill="none" stroke="#fff" stroke-width="1.2"/></svg>
<div class="a" style="left:998px;top:101px;width:236px;height:277px;background:#d8d8d8;"></div>
<div class="t" style="top:104.8px;line-height:20px;font-size:12px;color:#14459a;left:1005px;">Objednávka:</div>
<div class="t" style="top:104.8px;line-height:20px;font-size:11.4px;color:#111;left:927px;width:300px;text-align:right;">11/2020/3</div>
<div class="a" style="left:1005px;top:122.0px;width:222px;height:1px;background:#c6c6c6;"></div>
<div class="t" style="top:126.80000000000001px;line-height:20px;font-size:12px;color:#14459a;left:1005px;">Dodavatel:</div>
<div class="t" style="top:126.80000000000001px;line-height:20px;font-size:11.4px;color:#111;left:927px;width:300px;text-align:right;">Mlýny a pekárny a.s.; Pekáre...</div>
<div class="a" style="left:1005px;top:144.0px;width:222px;height:1px;background:#c6c6c6;"></div>
<div class="t" style="top:148.8px;line-height:20px;font-size:12px;color:#14459a;left:1005px;">Popis:</div>
<div class="t" style="top:148.8px;line-height:20px;font-size:11.4px;color:#111;left:927px;width:300px;text-align:right;"></div>
<div class="a" style="left:1005px;top:166.0px;width:222px;height:1px;background:#c6c6c6;"></div>
<div class="t" style="top:170.8px;line-height:20px;font-size:12px;color:#14459a;left:1005px;">Netto:</div>
<div class="t" style="top:170.8px;line-height:20px;font-size:11.4px;color:#14459a;left:927px;width:300px;text-align:right;"><span style="color:#111">314 000,00</span> Kč</div>
<div class="a" style="left:1005px;top:188.0px;width:222px;height:1px;background:#c6c6c6;"></div>
<div class="t" style="top:192.8px;line-height:20px;font-size:12px;color:#14459a;left:1005px;">DPH:</div>
<div class="t" style="top:192.8px;line-height:20px;font-size:11.4px;color:#14459a;left:927px;width:300px;text-align:right;"><span style="color:#111">65 940,00</span> Kč</div>
<div class="a" style="left:1005px;top:210.0px;width:222px;height:1px;background:#c6c6c6;"></div>
<div class="t" style="top:214.8px;line-height:20px;font-size:12px;color:#14459a;font-weight:bold;left:1005px;">Brutto:</div>
<div class="t" style="top:214.8px;line-height:20px;font-size:12px;color:#14459a;font-weight:bold;left:927px;width:300px;text-align:right;"><span style="color:#111">379 940,00</span> Kč</div>
<div class="a" style="left:1005px;top:232.0px;width:222px;height:1px;background:#c6c6c6;"></div>
<div class="t" style="top:236.8px;line-height:20px;font-size:12px;color:#14459a;left:1005px;">Datum případu:</div>
<div class="t" style="top:236.8px;line-height:20px;font-size:11.4px;color:#111;left:927px;width:300px;text-align:right;">05.01.2020</div>
<div class="a" style="left:1005px;top:254.0px;width:222px;height:1px;background:#c6c6c6;"></div>
<div class="t" style="top:258.8px;line-height:20px;font-size:12px;color:#14459a;left:1005px;">Datum zdan. plnění:</div>
<div class="t" style="top:258.8px;line-height:20px;font-size:11.4px;color:#111;left:927px;width:300px;text-align:right;">05.01.2020</div>
<div class="a" style="left:1005px;top:276.0px;width:222px;height:1px;background:#c6c6c6;"></div>
<div class="t" style="top:280.8px;line-height:20px;font-size:12px;color:#14459a;left:1005px;">Datum splatnosti:</div>
<div class="t" style="top:280.8px;line-height:20px;font-size:11.4px;color:#111;left:927px;width:300px;text-align:right;">19.01.2020</div>
<div class="a" style="left:1005px;top:298.0px;width:222px;height:1px;background:#c6c6c6;"></div>
<div class="t" style="top:302.8px;line-height:20px;font-size:12px;color:#14459a;left:1005px;">Datum potvrzení:</div>
<div class="t" style="top:302.8px;line-height:20px;font-size:11.4px;color:#111;left:927px;width:300px;text-align:right;">03.12.2020</div>
<div class="a" style="left:1005px;top:320.0px;width:222px;height:1px;background:#c6c6c6;"></div>
<div class="t" style="top:324.8px;line-height:20px;font-size:12px;color:#14459a;left:1005px;">Zaplaceno:</div>
<div class="t" style="top:324.8px;line-height:20px;font-size:11.4px;color:#14459a;left:927px;width:300px;text-align:right;"><span style="color:#111">0,00</span> Kč</div>
<div class="a" style="left:1005px;top:342.0px;width:222px;height:1px;background:#c6c6c6;"></div>
<div class="a" style="left:1178px;top:349px;width:23px;height:23px;background:#3cc47c;"></div>
<svg style="left:1208px;top:351px;" width="15.600000000000001" height="18.2" viewBox="0 0 12 14"><path d="M3.2 6V4.2a2.8 2.8 0 0 1 5.6 0V6" fill="none" stroke="#3cc47c" stroke-width="1.4"/><rect x="0.5" y="6" width="11" height="8" fill="#3cc47c"/></svg>
<div class="a" style="left:998px;top:385px;width:236px;height:25px;background:#0091ca;"></div>
<div class="t" style="top:388.6px;line-height:20px;font-size:13px;color:#fff;font-weight:bold;left:1002px;">Zálohy</div>
<div class="a" style="left:1209px;top:387px;width:1px;height:21px;background:#0a7fb5;"></div>
<svg style="left:1215px;top:394px;" width="13" height="7" viewBox="0 0 13 7"><path d="M0.5 6.5L6.5 0.5L12.5 6.5" fill="none" stroke="#fff" stroke-width="1.2"/></svg>
<div class="a" style="left:998px;top:410px;width:236px;height:79px;background:#d8d8d8;"></div>
<div class="t" style="top:413.8px;line-height:20px;font-size:12px;color:#14459a;left:1005px;">Zálohy:</div>
<div class="t" style="top:413.8px;line-height:20px;font-size:11.4px;color:#14459a;left:927px;width:300px;text-align:right;"><span style="color:#111">0,00</span> Kč</div>
<div class="a" style="left:1005px;top:431px;width:222px;height:1px;background:#c6c6c6;"></div>
<div class="t" style="top:435.8px;line-height:20px;font-size:12px;color:#14459a;font-weight:bold;left:1005px;">Zbývá:</div>
<div class="t" style="top:435.8px;line-height:20px;font-size:12px;color:#14459a;font-weight:bold;left:927px;width:300px;text-align:right;"><span style="color:#111">0,00</span> Kč</div>
<div class="a" style="left:1005px;top:453px;width:222px;height:1px;background:#c6c6c6;"></div>
<div class="a" style="left:998px;top:496px;width:236px;height:25px;background:#0091ca;"></div>
<div class="t" style="top:499.6px;line-height:20px;font-size:13px;color:#fff;font-weight:bold;left:1002px;">Platby</div>
<div class="a" style="left:1209px;top:498px;width:1px;height:21px;background:#0a7fb5;"></div>
<svg style="left:1215px;top:505px;" width="13" height="7" viewBox="0 0 13 7"><path d="M0.5 6.5L6.5 0.5L12.5 6.5" fill="none" stroke="#fff" stroke-width="1.2"/></svg>
<div class="a" style="left:998px;top:521px;width:236px;height:79px;background:#d8d8d8;"></div>
<div class="t" style="top:524.8px;line-height:20px;font-size:12px;color:#14459a;left:1005px;">Zaplaceno:</div>
<div class="t" style="top:524.8px;line-height:20px;font-size:11.4px;color:#14459a;left:927px;width:300px;text-align:right;"><span style="color:#111">0,00</span> Kč</div>
<div class="a" style="left:1005px;top:542px;width:222px;height:1px;background:#c6c6c6;"></div>
<div class="t" style="top:546.8px;line-height:20px;font-size:12px;color:#14459a;font-weight:bold;left:1005px;">Zbývá:</div>
<div class="t" style="top:546.8px;line-height:20px;font-size:12px;color:#14459a;font-weight:bold;left:927px;width:300px;text-align:right;"><span style="color:#111">0,00</span> Kč</div>
<div class="a" style="left:1005px;top:564px;width:222px;height:1px;background:#c6c6c6;"></div>
<div class="a" style="left:998px;top:607px;width:236px;height:25px;background:#0091ca;"></div>
<div class="t" style="top:610.6px;line-height:20px;font-size:13px;color:#fff;font-weight:bold;left:1002px;">Změny</div>
<div class="a" style="left:1209px;top:609px;width:1px;height:21px;background:#0a7fb5;"></div>
<svg style="left:1215px;top:616px;" width="13" height="7" viewBox="0 0 13 7"><path d="M0.5 6.5L6.5 0.5L12.5 6.5" fill="none" stroke="#fff" stroke-width="1.2"/></svg>
<div class="a" style="left:998px;top:632px;width:236px;height:51px;background:#d8d8d8;"></div>
<div class="t" style="top:635.8px;line-height:20px;font-size:12px;color:#14459a;left:1005px;">Vytvořil:</div>
<div class="t" style="top:635.8px;line-height:20px;font-size:11.4px;color:#14459a;left:927px;width:300px;text-align:right;"><span style="font-size:11px">K2 05.01.2020 18:15:32</span></div>
<div class="a" style="left:1005px;top:653px;width:222px;height:1px;background:#c6c6c6;"></div>
<div class="t" style="top:657.8px;line-height:20px;font-size:12px;color:#14459a;left:1005px;">Změnil:</div>
<div class="t" style="top:657.8px;line-height:20px;font-size:11.4px;color:#14459a;left:927px;width:300px;text-align:right;"><span style="font-size:11px">K2 03.12.2020 10:22:51</span></div>
<div class="a" style="left:1005px;top:675px;width:222px;height:1px;background:#c6c6c6;"></div>
<div class="a" style="left:998px;top:689px;width:236px;height:25px;background:#0091ca;"></div>
<div class="a" style="left:1209px;top:691px;width:1px;height:21px;background:#0a7fb5;"></div>
<svg style="left:1215px;top:698px;" width="13" height="7" viewBox="0 0 13 7"><path d="M0.5 6.5L6.5 0.5L12.5 6.5" fill="none" stroke="#fff" stroke-width="1.2"/></svg>
<div class="t" style="top:691.9px;line-height:20px;font-size:13.4px;color:#fff;font-weight:bold;left:906.5px;width:300px;text-align:right;">Vztahy s firmami</div>
<div class="a" style="left:998px;top:714px;width:236px;height:121px;background:#d8d8d8;"></div>
<div class="a" style="left:1005px;top:721px;width:222px;height:107px;background:#d8d8d8;border:1px solid #9a9a9a;"></div>
<div class="a" style="left:1006px;top:742px;width:220px;height:1px;background:#b8b8b8;"></div>
<div class="a" style="left:1078px;top:722px;width:1px;height:20px;background:#b8b8b8;"></div>
<div class="a" style="left:1152px;top:722px;width:1px;height:20px;background:#b8b8b8;"></div>
<div class="t" style="top:722px;line-height:20px;font-size:12px;color:#14459a;left:1010px;">Firma</div>
<div class="t" style="top:722px;line-height:20px;font-size:12px;color:#14459a;left:1083px;">Typ</div>
<div class="t" style="top:722px;line-height:20px;font-size:12px;color:#14459a;left:1157px;">Doklad</div>
<div class="a" style="left:1006px;top:775px;width:220px;height:21px;background:#bfbfbf;"></div>
<div class="t" style="top:776px;line-height:20px;font-size:13px;color:#111;left:966.0px;width:300px;text-align:center;">Žádné údaje</div>
<div class="a" style="left:998px;top:839px;width:236px;height:25px;background:#0091ca;"></div>
<div class="t" style="top:842.6px;line-height:20px;font-size:13px;color:#fff;font-weight:bold;left:1002px;">Nastavení</div>
<div class="a" style="left:1209px;top:841px;width:1px;height:21px;background:#0a7fb5;"></div>
<svg style="left:1215px;top:848px;" width="13" height="7" viewBox="0 0 13 7"><path d="M0.5 6.5L6.5 0.5L12.5 6.5" fill="none" stroke="#fff" stroke-width="1.2"/></svg>
<div class="a" style="left:998px;top:864px;width:236px;height:50px;background:#d8d8d8;"></div>
<div class="t" style="top:867px;line-height:20px;font-size:12px;color:#14459a;left:1012px;">Období</div>
<div class="t" style="top:867px;line-height:20px;font-size:12px;color:#14459a;left:1127px;">Sklad</div>
<div class="a" style="left:1005px;top:885px;width:109px;height:23px;background:#dcdcbd;border:1px solid #00468c;"></div>
<div class="t" style="top:887px;line-height:20px;font-size:12px;color:#111;left:1008px;">2023</div>
<svg style="left:1097px;top:892px;" width="11" height="9" viewBox="0 0 11 9"><rect x="0.5" y="0.5" width="2" height="2" fill="none" stroke="#1a4fa3" stroke-width="1"/><rect x="4.5" y="0.5" width="2" height="2" fill="none" stroke="#1a4fa3" stroke-width="1"/><rect x="8.5" y="0.5" width="2" height="2" fill="none" stroke="#1a4fa3" stroke-width="1"/><path d="M0.5 4.5L5.5 8.5L10.5 4.5" fill="none" stroke="#1a4fa3" stroke-width="1.1"/></svg>
<div class="a" style="left:1120px;top:885px;width:107px;height:23px;background:#dcdcbd;border:1px solid #00468c;"></div>
<div class="t" style="top:887px;line-height:20px;font-size:12px;color:#111;left:1123px;">EXP</div>
<svg style="left:1210px;top:892px;" width="11" height="9" viewBox="0 0 11 9"><rect x="0.5" y="0.5" width="2" height="2" fill="none" stroke="#1a4fa3" stroke-width="1"/><rect x="4.5" y="0.5" width="2" height="2" fill="none" stroke="#1a4fa3" stroke-width="1"/><rect x="8.5" y="0.5" width="2" height="2" fill="none" stroke="#1a4fa3" stroke-width="1"/><path d="M0.5 4.5L5.5 8.5L10.5 4.5" fill="none" stroke="#1a4fa3" stroke-width="1.1"/></svg>
<div class="a" style="left:84px;top:253px;width:600px;height:408px;background:#dcf3fd;border:1px solid #2b8cf2;"></div>
<div class="a" style="left:85px;top:254px;width:598px;height:25px;background:#0054a6;"></div>
<div class="t" style="top:257.6px;line-height:20px;font-size:13px;color:#fff;font-weight:bold;left:89px;">Filtr - FAP</div>
<div class="a" style="left:612px;top:256px;width:1px;height:21px;background:#003f80;"></div>
<svg style="left:619px;top:261px;" width="11" height="11" viewBox="0 0 11 11"><rect x="0.6" y="0.6" width="9.8" height="9.8" fill="none" stroke="#fff" stroke-width="1.2"/><path d="M0.6 5.5H5.5V0.6" fill="none" stroke="#fff" stroke-width="1.2"/></svg>
<svg style="left:642px;top:261px;" width="11" height="11" viewBox="0 0 11 11"><rect x="0.6" y="0.6" width="9.8" height="9.8" fill="none" stroke="#fff" stroke-width="1.2"/></svg>
<svg style="left:665px;top:261px;" width="11" height="11" viewBox="0 0 11 11"><path d="M0 0L11 11M11 0L0 11" stroke="#fff" stroke-width="1.2"/></svg>
<div class="a" style="left:88px;top:282px;width:113px;height:25px;background:#0054a6;"></div>
<svg style="left:91px;top:287px;" width="16" height="14" viewBox="0 0 16 14"><rect x="0" y="0.0" width="16" height="1.6" fill="#9bb8dc"/><rect x="0" y="3.8" width="16" height="1.6" fill="#9bb8dc"/><rect x="0" y="7.6" width="16" height="1.6" fill="#9bb8dc"/><rect x="0" y="11.399999999999999" width="16" height="1.6" fill="#9bb8dc"/></svg>
<div class="t" style="top:285.4px;line-height:20px;font-size:12px;color:#fff;left:115px;">Podmínky filtru</div>
<div class="a" style="left:202px;top:282px;width:111px;height:25px;background:#00adee;"></div>
<svg style="left:205px;top:288.6px;" width="16" height="11" viewBox="0 0 16 11"><rect x="0" y="0.0" width="16" height="1.4" fill="#fff"/><rect x="0" y="4.6" width="16" height="1.4" fill="#9fdcf5"/><rect x="0" y="9.2" width="16" height="1.4" fill="#fff"/></svg>
<div class="t" style="top:285.4px;line-height:20px;font-size:12px;color:#fff;left:228px;">Vlastnosti filtru</div>
<div class="a" style="left:88px;top:307px;width:592px;height:2px;background:#00adee;"></div>
<div class="a" style="left:88px;top:309px;width:592px;height:319px;background:#dcf3fd;border:1px solid #8fd6f7;border-top:none;"></div>
<div class="t" style="top:312.8px;line-height:20px;font-size:11.3px;color:#14459a;left:102px;">Název</div>
<div class="inp" style="left:95px;top:330px;width:287px;height:23px;"></div>
<div class="t" style="top:332px;line-height:20px;font-size:12px;color:#111;left:98px;letter-spacing:-0.8px;">FAP</div>
<svg style="left:364.8px;top:342px;" width="12" height="2" viewBox="0 0 12 2"><rect x="0.2" y="0" width="1.7" height="1.7" fill="#0d4d9d"/><rect x="4.9" y="0" width="1.7" height="1.7" fill="#0d4d9d"/><rect x="9.6" y="0" width="1.7" height="1.7" fill="#0d4d9d"/></svg>
<div class="t" style="top:357px;line-height:20px;font-size:12px;color:#14459a;left:102px;">Popis</div>
<div class="inp" style="left:95px;top:374px;width:287px;height:247px;"></div>
<div class="a" style="left:344px;top:377px;width:16px;height:241px;background:#f0f0f0;"></div>
<svg style="left:348px;top:383px;" width="7.4" height="6" viewBox="0 0 7.4 6"><path d="M0.6 5L3.7 1.4L6.8 5" fill="none" stroke="#b2b2b2" stroke-width="2.1"/></svg>
<svg style="left:348px;top:606px;" width="7.4" height="6" viewBox="0 0 7.4 6"><path d="M0.6 1L3.7 4.6L6.8 1" fill="none" stroke="#b2b2b2" stroke-width="2.1"/></svg>
<svg style="left:364.8px;top:385px;" width="12" height="2" viewBox="0 0 12 2"><rect x="0.2" y="0" width="1.7" height="1.7" fill="#0d4d9d"/><rect x="4.9" y="0" width="1.7" height="1.7" fill="#0d4d9d"/><rect x="9.6" y="0" width="1.7" height="1.7" fill="#0d4d9d"/></svg>
<div class="t" style="top:317px;line-height:20px;font-size:13px;color:#14459a;font-weight:bold;left:393px;">Vlastnosti</div>
<div class="a" style="left:388px;top:338px;width:285px;height:2px;background:#00adee;"></div>
<div class="a" style="left:389px;top:349px;width:17px;height:17px;background:#ffffe1;border:1px solid #1a56a6;"></div>
<div class="t" style="top:348px;line-height:20px;font-size:12px;color:#14459a;left:412px;">Znovu spustit při obnově</div>
<div class="a" style="left:389px;top:378px;width:17px;height:17px;background:#ffffe1;border:1px solid #1a56a6;"></div>
<div class="t" style="top:377px;line-height:20px;font-size:12px;color:#14459a;left:412px;">Testovat právo na záznam</div>
<div class="a" style="left:389px;top:407px;width:17px;height:17px;background:#ffffe1;border:1px solid #1a56a6;"></div>
<div class="t" style="top:406px;line-height:20px;font-size:12px;color:#14459a;left:412px;">Nabízet i potlačené podmínky</div>
<div class="t" style="top:431px;line-height:20px;font-size:12px;color:#14459a;left:395px;">Systémové podmínky</div>
<div class="inp" style="left:388px;top:448px;width:285px;height:23px;"></div>
<div class="t" style="top:450.5px;line-height:20px;font-size:12.5px;color:#111;left:391px;">Použít</div>
<svg style="left:656px;top:455px;" width="11" height="9" viewBox="0 0 11 9"><rect x="0.5" y="0.5" width="2" height="2" fill="none" stroke="#1a4fa3" stroke-width="1"/><rect x="4.5" y="0.5" width="2" height="2" fill="none" stroke="#1a4fa3" stroke-width="1"/><rect x="8.5" y="0.5" width="2" height="2" fill="none" stroke="#1a4fa3" stroke-width="1"/><path d="M0.5 4.5L5.5 8.5L10.5 4.5" fill="none" stroke="#1a4fa3" stroke-width="1.1"/></svg>
<div class="a" style="left:534px;top:498px;width:139px;height:23px;background:#00adee;"></div>
<svg style="left:536px;top:503px;" width="18" height="13" viewBox="0 0 18 13"><path d="M4.5 1L0.8 6.5L4.5 12M13.5 1L17.2 6.5L13.5 12M11 0.5L7 12.5" fill="none" stroke="#fff" stroke-width="1.2"/></svg>
<div class="t" style="top:500px;line-height:20px;font-size:12px;color:#fff;left:465.0px;width:300px;text-align:center;">Test filtru</div>
<div class="a" style="left:388px;top:598px;width:140px;height:23px;background:#00adee;"></div>
<svg style="left:392px;top:602px;" width="15" height="15" viewBox="0 0 15 15"><path d="M0 0H12L15 3V15H0Z" fill="#fff"/><rect x="3" y="0" width="8" height="4.5" fill="#00adee"/><rect x="8" y="0.8" width="2" height="3" fill="#fff"/><rect x="2.5" y="8" width="10" height="5" fill="#00adee"/></svg>
<div class="t" style="top:600px;line-height:20px;font-size:12px;color:#fff;left:319.0px;width:300px;text-align:center;">Uložit</div>
<div class="a" style="left:533px;top:597px;width:143px;height:25px;background:#009edb;border:3px solid #ea1c24;"></div>
<div class="t" style="top:600px;line-height:20px;font-size:12px;color:#fff;left:454.0px;width:300px;text-align:center;">Uložit jako...</div>
<div class="a" style="left:88px;top:634px;width:144px;height:23px;background:#00adee;"></div>
<svg style="left:93px;top:639px;" width="14" height="13" viewBox="0 0 19 17"><rect x="0.6" y="0.6" width="17.8" height="3.6" fill="none" stroke="#fff" stroke-width="1.2"/><path d="M0.6 4.2V16.4H18.4V4.2M7.3 6.6H11.7" fill="none" stroke="#fff" stroke-width="1.2"/></svg>
<div class="t" style="top:636px;line-height:20px;font-size:12px;color:#fff;left:21.0px;width:300px;text-align:center;">Kontejner...</div>
<div class="a" style="left:388px;top:634px;width:143px;height:23px;background:#97c600;"></div>
<svg style="left:396px;top:640px;" width="10" height="12" viewBox="0 0 10 12"><path d="M0.7 0.8L9.3 6L0.7 11.2Z" fill="none" stroke="#fff" stroke-width="1.2"/></svg>
<div class="t" style="top:636px;line-height:20px;font-size:12px;color:#fff;left:320.0px;width:300px;text-align:center;">Filtrovat</div>
<div class="a" style="left:537px;top:634px;width:143px;height:23px;background:#00adee;"></div>
<div class="t" style="top:636px;line-height:20px;font-size:12px;color:#fff;left:458.0px;width:300px;text-align:center;"><u>S</u>torno</div>
<div class="a" style="left:702px;top:197px;width:452px;height:542px;background:#dcf3fd;border:1px solid #5f5f5f;border-left-color:#8a8a8a;border-top-color:#707070;box-shadow:1px 3px 10px 1px rgba(0,0,0,.42);"></div>
<div class="a" style="left:703px;top:198px;width:450px;height:30px;background:#fff;"></div>
<svg style="left:711px;top:204px;" width="16" height="16" viewBox="0 0 16 16"><defs><linearGradient id="k2g2" x1="0" y1="0" x2="0" y2="1"><stop offset="0" stop-color="#ff5a4a"/><stop offset="0.5" stop-color="#d400d4"/><stop offset="1" stop-color="#2a00f0"/></linearGradient></defs><rect x="0" y="0" width="16" height="16" fill="#fbfaff"/><rect x="0" y="0" width="2" height="16" fill="url(#k2g2)"/><ellipse cx="11.5" cy="1" rx="4" ry="0.9" fill="#6748f5" opacity="0.85"/><ellipse cx="15" cy="2.6" rx="0.8" ry="0.5" fill="#9a70f0" opacity="0.7"/><ellipse cx="8.5" cy="12.2" rx="3" ry="0.7" fill="#ff5c9c" opacity="0.75"/><ellipse cx="15" cy="11.6" rx="0.9" ry="0.7" fill="#b060f0" opacity="0.75"/><ellipse cx="4" cy="14.6" rx="1.8" ry="0.8" fill="#ff9060" opacity="0.7"/><text x="3.7" y="10.1" font-family="Liberation Sans,sans-serif" font-size="6" font-weight="bold" fill="#000" textLength="8.6" lengthAdjust="spacingAndGlyphs">K2</text></svg>
<div class="t" style="top:202.7px;line-height:20px;font-size:12px;color:#111;left:732px;">Uložit jako...</div>
<svg style="left:1034px;top:212px;" width="10" height="1" viewBox="0 0 10 1"><rect width="10" height="1" fill="#111"/></svg>
<svg style="left:1079px;top:207px;" width="10" height="10" viewBox="0 0 10 10"><rect x="0.5" y="0.5" width="9" height="9" fill="none" stroke="#111"/></svg>
<svg style="left:1125px;top:207px;" width="10" height="10" viewBox="0 0 10 10"><path d="M0 0L10 10M10 0L0 10" stroke="#111" stroke-width="1"/></svg>
<div class="t" style="top:233.6px;line-height:20px;font-size:13px;color:#14459a;font-weight:bold;left:710px;">Základní údaje</div>
<div class="a" style="left:706px;top:254px;width:444px;height:2px;background:#00adee;"></div>
<div class="t" style="top:259.8px;line-height:20px;font-size:11.3px;color:#14459a;left:713px;">Název</div>
<div class="a" style="left:706px;top:277px;width:444px;height:24px;background:#ffffe1;border:2px solid #0054a6;"></div>
<div class="a" style="left:707px;top:275px;width:443px;height:28px;border:3px solid #ea1c24;"></div>
<div class="a" style="left:710px;top:281px;width:19px;height:16px;background:#0a64d6;"></div>
<div class="a" style="left:729px;top:281px;width:1px;height:16px;background:#f0a030;"></div>
<div class="t" style="top:279.5px;line-height:20px;font-size:12px;color:#fff;left:710.5px;letter-spacing:-0.7px;">FAP</div>
<svg style="left:1132.8px;top:288px;" width="12" height="2" viewBox="0 0 12 2"><rect x="0.2" y="0" width="1.7" height="1.7" fill="#0d4d9d"/><rect x="4.9" y="0" width="1.7" height="1.7" fill="#0d4d9d"/><rect x="9.6" y="0" width="1.7" height="1.7" fill="#0d4d9d"/></svg>
<div class="t" style="top:304px;line-height:20px;font-size:12px;color:#14459a;left:713px;">Popis</div>
<div class="inp" style="left:706px;top:321px;width:444px;height:57px;"></div>
<div class="a" style="left:1112px;top:324px;width:16px;height:51px;background:#f0f0f0;"></div>
<svg style="left:1116px;top:329.5px;" width="7.4" height="6" viewBox="0 0 7.4 6"><path d="M0.6 5L3.7 1.4L6.8 5" fill="none" stroke="#b2b2b2" stroke-width="2.1"/></svg>
<svg style="left:1116px;top:363.5px;" width="7.4" height="6" viewBox="0 0 7.4 6"><path d="M0.6 1L3.7 4.6L6.8 1" fill="none" stroke="#b2b2b2" stroke-width="2.1"/></svg>
<svg style="left:1132.8px;top:332px;" width="12" height="2" viewBox="0 0 12 2"><rect x="0.2" y="0" width="1.7" height="1.7" fill="#0d4d9d"/><rect x="4.9" y="0" width="1.7" height="1.7" fill="#0d4d9d"/><rect x="9.6" y="0" width="1.7" height="1.7" fill="#0d4d9d"/></svg>
<div class="t" style="top:381.7px;line-height:20px;font-size:11.6px;color:#14459a;left:713px;">Zařazení</div>
<div class="inp" style="left:706px;top:399px;width:444px;height:23px;"></div>
<div class="a" style="left:705px;top:397px;width:448px;height:26px;border:3px solid #ea1c24;border-right:none;"></div>
<div class="t" style="top:401.5px;line-height:20px;font-size:13px;color:#111;left:709px;">Auto\leasing</div>
<svg style="left:1132.8px;top:410px;" width="12" height="2" viewBox="0 0 12 2"><rect x="0.2" y="0" width="1.7" height="1.7" fill="#0d4d9d"/><rect x="4.9" y="0" width="1.7" height="1.7" fill="#0d4d9d"/><rect x="9.6" y="0" width="1.7" height="1.7" fill="#0d4d9d"/></svg>
<div class="t" style="top:430.3px;line-height:20px;font-size:13px;color:#14459a;font-weight:bold;left:710px;">Přiřazení</div>
<div class="a" style="left:706px;top:451px;width:444px;height:2px;background:#00adee;"></div>
<div class="t" style="top:457px;line-height:20px;font-size:12px;color:#14459a;left:713px;">Úroveň</div>
<div class="inp" style="left:706px;top:474px;width:220px;height:23px;"></div>
<div class="t" style="top:476.5px;line-height:20px;font-size:12.6px;color:#111;left:709px;">Uživatel</div>
<svg style="left:909px;top:481px;" width="11" height="9" viewBox="0 0 11 9"><rect x="0.5" y="0.5" width="2" height="2" fill="none" stroke="#1a4fa3" stroke-width="1"/><rect x="4.5" y="0.5" width="2" height="2" fill="none" stroke="#1a4fa3" stroke-width="1"/><rect x="8.5" y="0.5" width="2" height="2" fill="none" stroke="#1a4fa3" stroke-width="1"/><path d="M0.5 4.5L5.5 8.5L10.5 4.5" fill="none" stroke="#1a4fa3" stroke-width="1.1"/></svg>
<div class="a" style="left:933px;top:477px;width:17px;height:17px;background:#ffffe1;border:1px solid #1a56a6;"></div>
<div class="t" style="top:476px;line-height:20px;font-size:12px;color:#14459a;left:956px;">Výchozí</div>
<div class="t" style="top:500.8px;line-height:20px;font-size:12px;color:#14459a;left:713px;">Uživatel</div>
<div class="inp" style="left:706px;top:518px;width:220px;height:23px;"></div>
<div class="t" style="top:520.5px;line-height:20px;font-size:12px;color:#111;left:709px;">K2</div>
<svg style="left:909px;top:525px;" width="11" height="9" viewBox="0 0 11 9"><rect x="0.5" y="0.5" width="2" height="2" fill="none" stroke="#1a4fa3" stroke-width="1"/><rect x="4.5" y="0.5" width="2" height="2" fill="none" stroke="#1a4fa3" stroke-width="1"/><rect x="8.5" y="0.5" width="2" height="2" fill="none" stroke="#1a4fa3" stroke-width="1"/><path d="M0.5 4.5L5.5 8.5L10.5 4.5" fill="none" stroke="#1a4fa3" stroke-width="1.1"/></svg>
<div class="t" style="top:500.8px;line-height:20px;font-size:12px;color:#14459a;left:939px;">Mandant</div>
<div class="inp" style="left:932px;top:518px;width:218px;height:23px;"></div>
<div class="t" style="top:520.5px;line-height:20px;font-size:12.2px;color:#111;left:935px;">DEMO</div>
<svg style="left:1133px;top:525px;" width="11" height="9" viewBox="0 0 11 9"><rect x="0.5" y="0.5" width="2" height="2" fill="none" stroke="#1a4fa3" stroke-width="1"/><rect x="4.5" y="0.5" width="2" height="2" fill="none" stroke="#1a4fa3" stroke-width="1"/><rect x="8.5" y="0.5" width="2" height="2" fill="none" stroke="#1a4fa3" stroke-width="1"/><path d="M0.5 4.5L5.5 8.5L10.5 4.5" fill="none" stroke="#1a4fa3" stroke-width="1.1"/></svg>
<div class="t" style="top:545.3px;line-height:20px;font-size:12px;color:#14459a;left:713px;">Firma</div>
<div class="a" style="left:706px;top:562px;width:220px;height:23px;background:#f0f0f0;border:1px solid #a5dcf7;"></div>
<svg style="left:909px;top:569px;" width="11" height="9" viewBox="0 0 11 9"><rect x="0.5" y="0.5" width="2" height="2" fill="none" stroke="#1a4fa3" stroke-width="1"/><rect x="4.5" y="0.5" width="2" height="2" fill="none" stroke="#1a4fa3" stroke-width="1"/><rect x="8.5" y="0.5" width="2" height="2" fill="none" stroke="#1a4fa3" stroke-width="1"/><path d="M0.5 4.5L5.5 8.5L10.5 4.5" fill="none" stroke="#1a4fa3" stroke-width="1.1"/></svg>
<div class="a" style="left:857px;top:712px;width:144px;height:23px;background:#00adee;"></div>
<div class="t" style="top:714px;line-height:20px;font-size:12px;color:#fff;left:779.0px;width:300px;text-align:center;">OK</div>
<div class="a" style="left:1007px;top:712px;width:143px;height:23px;background:#00adee;"></div>
<div class="t" style="top:714px;line-height:20px;font-size:12px;color:#fff;left:928.0px;width:300px;text-align:center;"><u>S</u>torno</div>
</div>
</body></html>
